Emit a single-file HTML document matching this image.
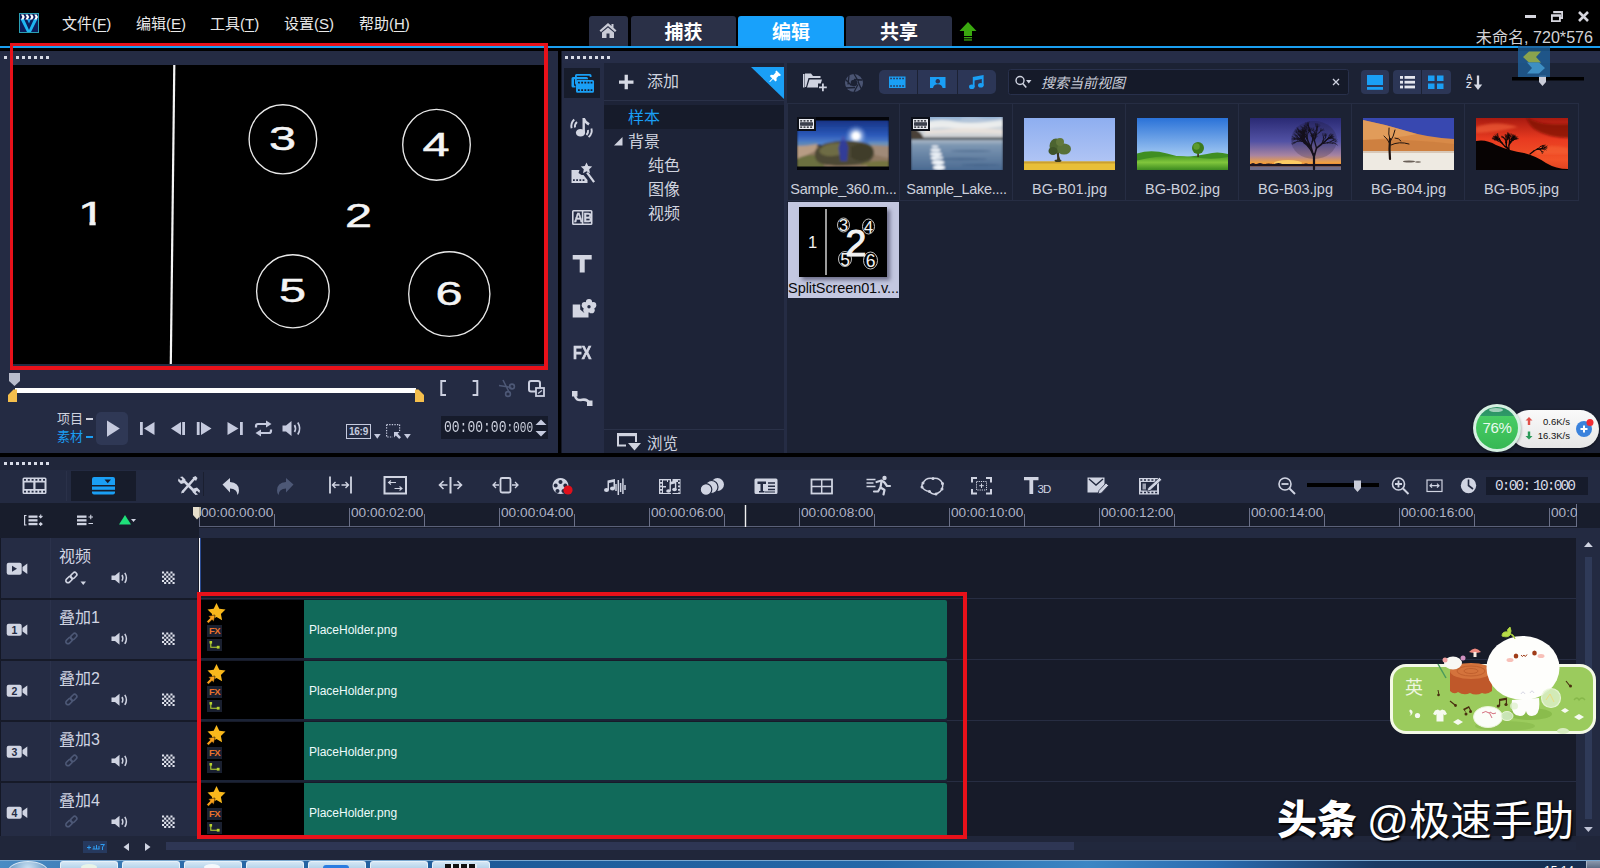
<!DOCTYPE html>
<html lang="zh-CN">
<head>
<meta charset="utf-8">
<title>VideoStudio</title>
<style>
*{box-sizing:border-box;margin:0;padding:0}
html,body{width:1600px;height:868px;overflow:hidden;background:#000}
body{position:relative;font-family:"Liberation Sans","Noto Sans CJK SC",sans-serif;color:#d4d7e2;font-size:15px;line-height:1}
.a{position:absolute}
svg{position:absolute;overflow:visible}
.t{position:absolute;white-space:nowrap}
/* top bar */
#top{left:0;top:0;width:1600px;height:46px;background:#000}
#blueline{left:0;top:46px;width:1600px;height:2px;background:#1b9ff0}
.menu{top:14px;font-size:15px;color:#e9e9e9;height:20px;line-height:20px}
.menu u{text-decoration:underline;text-underline-offset:2px}
.tab{top:16px;height:30px;background:#2a3047;color:#fff;font-weight:bold;font-size:19px;text-align:center;line-height:33px;border-radius:3px 3px 0 0}
.tab.on{background:#18a1fb}
/* panels */
#pv{left:0;top:51px;width:558px;height:402px;background:#242b43}
#lib{left:561px;top:51px;width:1039px;height:402px;background:#1c2234}
#tl{left:0;top:457px;width:1600px;height:403px;background:#20263a}
.rl{top:505px;font-size:13.700px;line-height:16px;color:#aeb3c6}
.lab{top:179px;width:111px;text-align:center;font-size:14.500px;line-height:20px;color:#ccd0dc}
.dots{height:3px;background:repeating-linear-gradient(90deg,#d8dbe6 0 3px,transparent 3px 6px)}
</style>
</head>
<body>
<!-- ============ TOP BAR ============ -->
<div id="top" class="a"></div>
<div id="blueline" class="a"></div>
<svg style="left:19px;top:13px" width="20" height="20" viewBox="0 0 20 20">
<rect x="0.5" y="0.5" width="19" height="19" fill="#0b1d5c" stroke="#2a9fb4"/>
<path d="M1.5 6 L5 6 L10 17 L15 6 L18.5 6 L12 19 L8 19 Z" fill="#1fb6f2"/>
<path d="M8 6 L12 6 L10 10.5 Z" fill="#1fa0e8"/>
<path d="M2 1.5h2.4l1.4 2.5l-1.4 2.5H2l1.4-2.5zM6.4 1.5h2.4l1.4 2.5l-1.4 2.5H6.4l1.4-2.5zM10.8 1.5h2.4l1.4 2.5l-1.4 2.5h-2.4l1.4-2.5zM15.2 1.5h2.4l1.4 2.5l-1.4 2.5h-2.4l1.4-2.5z" fill="#fff"/>
</svg>
<div class="t menu" style="left:62px">文件(<u>F</u>)</div>
<div class="t menu" style="left:136px">编辑(<u>E</u>)</div>
<div class="t menu" style="left:210px">工具(<u>T</u>)</div>
<div class="t menu" style="left:284px">设置(<u>S</u>)</div>
<div class="t menu" style="left:359px">帮助(<u>H</u>)</div>
<div class="a tab" style="left:589px;width:39px"></div>
<svg style="left:599px;top:22px" width="18" height="17" viewBox="0 0 18 17"><path d="M9 1 L0.5 8.5 L2 10 L9 4 L16 10 L17.5 8.5 L14.5 5.8 V2 H12.5 V4 Z" fill="#c9cbd6"/><path d="M9 5.5 L3 10.5 V16 H7.5 V11.5 H10.5 V16 H15 V10.5 Z" fill="#c9cbd6"/></svg>
<div class="a tab" style="left:631px;width:105px">捕获</div>
<div class="a tab on" style="left:738px;width:106px">编辑</div>
<div class="a tab" style="left:846px;width:106px">共享</div>
<svg style="left:959px;top:22px" width="18" height="19" viewBox="0 0 18 19"><path d="M9 0 L17.5 9 H13 V14 H5 V9 H0.5 Z" fill="#3aa80f"/><rect x="5" y="15" width="8" height="1.3" fill="#3aa80f"/><rect x="5" y="17.3" width="8" height="1.3" fill="#3aa80f"/></svg>
<div class="a" style="left:1525px;top:15px;width:11px;height:3px;background:#d6d6de"></div>
<svg style="left:1551px;top:11px" width="12" height="11" viewBox="0 0 12 11"><path d="M3 0.9 H11.1 V7 H9" fill="none" stroke="#d6d6de" stroke-width="1.8"/><rect x="0.9" y="4.4" width="8" height="5.7" fill="none" stroke="#d6d6de" stroke-width="1.8"/><rect x="0" y="3.5" width="9.8" height="2.2" fill="#d6d6de"/><rect x="2.2" y="0" width="9.8" height="2.2" fill="#d6d6de"/></svg>
<svg style="left:1578px;top:11px" width="11" height="11" viewBox="0 0 11 11"><path d="M1 1 L10 10 M10 1 L1 10" stroke="#d6d6de" stroke-width="2.6"/></svg>
<div class="t" style="right:7px;top:28px;font-size:16.100px;line-height:18px;color:#d2d2d6">未命名, 720*576</div>

<!-- ============ PREVIEW PANEL ============ -->
<div id="pv" class="a"></div>
<div class="a dots" style="left:4px;top:56px;width:45px"></div>
<!-- preview screen -->
<div class="a" style="left:10px;top:65px;width:535px;height:299px;background:#000"></div>
<svg style="left:13px;top:65px" width="531" height="299" viewBox="13 65 531 299">
<path d="M174.3 65 L170.8 364" stroke="#f4f4f4" stroke-width="2.2" fill="none"/>
<g fill="none" stroke="#e8e8e8" stroke-width="1.35">
<ellipse cx="282.9" cy="139.3" rx="33.8" ry="34.6"/>
<ellipse cx="436.5" cy="144.8" rx="33.8" ry="35.4"/>
<ellipse cx="292.9" cy="291.3" rx="36.3" ry="36.5"/>
<ellipse cx="449.3" cy="294" rx="40.6" ry="42.3"/>
</g>
<g fill="#f4f4f4" stroke="#f4f4f4" stroke-width=".45" font-family="Liberation Sans, sans-serif" font-size="32" text-anchor="middle">
<text transform="translate(91.500 225) scale(1.52 1.03)">1</text>
<text transform="translate(358.5 226.5) scale(1.52 1.03)">2</text>
<text transform="translate(282.5 150) scale(1.52 1.03)">3</text>
<text transform="translate(436 156) scale(1.52 1.03)">4</text>
<text transform="translate(292.5 302) scale(1.52 1.03)">5</text>
<text transform="translate(449 304.5) scale(1.52 1.03)">6</text>
</g>
<rect x="78" y="221.800" width="11.400" height="5" fill="#000"/><rect x="95.700" y="221.800" width="10" height="5" fill="#000"/>
</svg>
<!-- red annotation box -->
<div class="a" style="left:10px;top:43px;width:538px;height:327px;border:3px solid #e8111a;border-right-width:4px;border-bottom-width:4px"></div>
<!-- scrubber -->
<svg style="left:0;top:370px" width="558" height="40" viewBox="0 370 558 40">
<path d="M9 373 H20 V381 L14.5 386 L9 381 Z" fill="#b9bccb"/>
<rect x="15" y="388" width="401" height="5" fill="#fff"/>
<path d="M8 402 V395 L13.5 389.5 H17 V402 Z" fill="#f5bf4c"/>
<path d="M424 402 V395 L418.5 389.5 H415 V402 Z" fill="#f5bf4c"/>
<path d="M446 381 H441.3 V395 H446" fill="none" stroke="#ccd0e0" stroke-width="2"/>
<path d="M472.6 381 H477.3 V395 H472.6" fill="none" stroke="#ccd0e0" stroke-width="2"/>
<g stroke="#4d5876" stroke-width="1.6" fill="none"><path d="M503 380 L509 392 M499 385.5 L511.5 387.5"/><circle cx="512" cy="386.5" r="2.4"/><circle cx="508" cy="394" r="2.4"/></g>
<rect x="529" y="381" width="11" height="10.5" rx="2" fill="none" stroke="#ccd0e0" stroke-width="2"/>
<rect x="536" y="388" width="8" height="8" fill="#242b43" stroke="#ccd0e0" stroke-width="1.8"/>
<path d="M538 393.5 L542 390.5" stroke="#ccd0e0" stroke-width="1.2"/>
</svg>
<!-- transport -->
<div class="t" style="left:57px;top:411px;font-size:13px;line-height:16px;color:#cfd2de">项目</div>
<div class="a" style="left:86px;top:418px;width:7px;height:2px;background:#cfd2de"></div>
<div class="t" style="left:57px;top:429px;font-size:13px;line-height:16px;color:#1b9df2">素材</div>
<div class="a" style="left:86px;top:436px;width:7px;height:2px;background:#1b9df2"></div>
<div class="a" style="left:96px;top:412px;width:32px;height:33px;background:#2f3855;border-radius:5px"></div>
<svg style="left:100px;top:415px" width="210" height="26" viewBox="100 415 210 26" fill="#c5cade">
<path d="M107 420.5 L119.8 428.6 L107 436.8 Z"/>
<rect x="140" y="422" width="2.8" height="13"/><path d="M154.5 422 V435 L144 428.5 Z"/>
<path d="M181 422 V435 L171 428.5 Z"/><rect x="182.2" y="422" width="2.8" height="13"/>
<rect x="196.8" y="422" width="2.8" height="13"/><path d="M201 422 V435 L211.5 428.5 Z"/>
<path d="M227.5 422 V435 L238.5 428.5 Z"/><rect x="240" y="422" width="2.8" height="13"/>
<g fill="none" stroke="#c5cade" stroke-width="2.2"><path d="M256 427.5 V426 Q256 424 258 424 H267"/><path d="M271 429.5 V431 Q271 433 269 433 H260"/></g>
<path d="M266 420.5 L271.5 424 L266 427.5 Z"/><path d="M261 429.5 L255.5 433 L261 436.5 Z"/>
<path d="M282.5 425.5 H286 L291.5 421 V436 L286 431.5 H282.5 Z"/>
<g fill="none" stroke="#c5cade" stroke-width="1.7"><path d="M294.5 425 Q296.5 428.5 294.5 432"/><path d="M297.8 422.5 Q301.5 428.5 297.8 434.5"/></g>
</svg>
<div class="a" style="left:346px;top:424px;width:25px;height:15px;border:1px solid #c5cade"></div>
<div class="t" style="left:346px;top:424px;width:25px;height:15px;line-height:15px;font-size:10px;font-weight:bold;text-align:center;color:#c5cade;letter-spacing:-0.3px">16:9</div>
<svg style="left:372px;top:422px" width="42" height="20" viewBox="372 422 42 20" fill="#c5cade">
<path d="M374 434 H380.6 L377.3 438.8 Z"/><path d="M404 434 H410.8 L407.4 438.8 Z"/>
<rect x="386.6" y="424.6" width="13" height="12.4" fill="none" stroke="#c5cade" stroke-width="1.2" stroke-dasharray="1.3 1.3"/>
<rect x="392.5" y="431" width="9" height="9" fill="#242b43"/>
<path d="M394 432 H399.5 L397.7 433.8 L401 437.2 L399.2 439 L395.8 435.6 L394 437.5 Z"/>
</svg>
<div class="a" style="left:441px;top:416px;width:107px;height:23px;background:#161b2b"></div>
<div class="t" style="left:444px;top:418px;font-family:'Liberation Mono','DejaVu Sans Mono',monospace;font-size:17px;line-height:19px;color:#cdd1de;transform:scaleX(.765);transform-origin:0 0">00:00:00<span style="font-size:14.500px">:000</span></div>
<svg style="left:535px;top:419px" width="12" height="18" viewBox="0 0 12 18" fill="#c5cade"><path d="M0.5 6 L6 0.5 L11.5 6 Z"/><path d="M0.5 12 L6 17.5 L11.5 12 Z"/></svg>

<!-- ============ LIBRARY PANEL ============ -->
<div id="lib" class="a"></div>
<div class="a" style="left:561px;top:51px;width:1039px;height:12px;background:#262d47"></div>
<div class="a dots" style="left:565px;top:56px;width:45px"></div>
<!-- sidebar -->
<div class="a" style="left:561px;top:63px;width:43px;height:390px;background:#252c45"></div>
<div class="a" style="left:561px;top:51px;width:1px;height:402px;background:#141826"></div>
<div class="a" style="left:564px;top:68px;width:36px;height:30px;background:#171c2b"></div>
<svg style="left:565px;top:66px" width="36" height="350" viewBox="565 66 36 350">
<!-- media (active) -->
<g fill="#1a9ff5"><path d="M573 74 h13.5 q1.5 0 1.500 1.500 v1.500 h-1.800 v-1.200 h-12.900 v7.200 h1.500 v1.800 h-1.800 q-1.500 0 -1.500 -1.500 v-7.800 q0 -1.500 1.500 -1.500z" transform="translate(3.500 0)"/>
<path d="M573 77 h13.500 q1.500 0 1.500 1.500 v0.700 h-14 v6.500 h1.500 v1.800 h-2.500 q-1.500 0 -1.500 -1.500 v-7.500 q0 -1.500 1.500 -1.500z"/>
<path d="M577.500 80 h15 q1.500 0 1.500 1.500 v9.700 q0 1.500 -1.500 1.500 h-15 q-1.500 0 -1.500 -1.500 v-9.700 q0 -1.500 1.500 -1.500z M578 81.800 v1.600 h1.800 v-1.600z M581.200 81.800 v1.600 h1.800 v-1.600z M584.400 81.800 v1.600 h1.800 v-1.600z M587.600 81.800 v1.600 h1.800 v-1.600z M590.600 81.800 v1.600 h1.800 v-1.600z M578 89.300 v1.600 h1.800 v-1.600z M581.200 89.300 v1.600 h1.800 v-1.600z M584.400 89.300 v1.600 h1.800 v-1.600z M587.600 89.300 v1.600 h1.800 v-1.600z M590.600 89.300 v1.600 h1.800 v-1.600z" fill-rule="evenodd"/></g>
<g fill="#d3d6e2">
<!-- music -->
<ellipse cx="580.500" cy="132.800" rx="4.600" ry="3.800"/><path d="M582.500 133 V118 h2.400 q.8 3 4.800 5.300 l-1.300 2.200 q-2.200-1.200-3.500-2.800 V133z"/>
<g fill="none" stroke="#d3d6e2" stroke-width="1.900"><path d="M577 122 q-2.600 2.200 -2 5.500"/><path d="M574.200 119.500 q-3.800 3.800 -2.600 8.800"/><path d="M588 130 q.6 2.800 -1.500 5"/><path d="M591.400 128.500 q1.400 5 -2.800 8.600"/></g>
<!-- transition -->
<path d="M571.500 170 h8 l-1 3 3 2 h2 l4 5 v3 h-16z M573 179.200 v1.800 h1.800 v-1.800z M576.200 179.200 v1.800 h1.800 v-1.800z M579.400 179.200 v1.800 h1.800 v-1.800z M582.600 179.200 v1.800 h1.800 v-1.800z" fill-rule="evenodd"/>
<path d="M586.500 162.500 l1.700 3.600 4 .5 -3 2.700 .8 4 -3.500 -2 -3.500 2 .8 -4 -3 -2.700 4 -.5z"/>
<path d="M588 172 l7 9.500 -1.800 1.300 -7 -9.500z"/>
<!-- AB -->
<path d="M573.500 210 h17.500 q1.500 0 1.500 1.500 v12 q0 1.500 -1.500 1.500 h-17.500 q-1.500 0 -1.500 -1.500 v-12 q0 -1.500 1.500 -1.500z M573.600 211.600 v11.800 h8.200 v-11.800z M583.400 211.600 v11.800 h7.500 v-11.800z" fill-rule="evenodd"/>
<!-- T -->
<path d="M572.700 255 h19 v4.500 h-7 v13 h-5 v-13 h-7z"/>
<!-- graphic -->
<path d="M572.700 304.500 h7.500 v5 l3.500 3 h4.800 v5 h-15.800z"/>
<g><circle cx="589" cy="302" r="3.100"/><circle cx="593.200" cy="305.200" r="3.100"/><circle cx="591.600" cy="310.200" r="3.100"/><circle cx="586.400" cy="310.200" r="3.100"/><circle cx="584.800" cy="305.200" r="3.100"/><circle cx="589" cy="306.800" r="3"/></g>
<circle cx="589" cy="306.800" r="1.700" fill="#252c45"/>
<!-- path -->
<rect x="572" y="391" width="5.500" height="5.500"/><rect x="587" y="400.500" width="5.500" height="5.500"/>
<path d="M575 395 q.5 6 7 4.800 q5.500 -1 7.500 3.700" fill="none" stroke="#d3d6e2" stroke-width="2.600"/>
</g>
</svg>
<div class="t" style="left:573px;top:341px;font-size:18px;line-height:24px;font-weight:bold;color:#d3d6e2;-webkit-text-stroke:.7px #d3d6e2;transform:scaleX(.8);transform-origin:0 0;letter-spacing:0">FX</div>
<div class="t" style="left:574px;top:207px;font-size:13.500px;line-height:21px;font-weight:bold;color:#d3d6e2;-webkit-text-stroke:.4px #d3d6e2;letter-spacing:.8px;transform:scaleX(.9);transform-origin:0 0">AB</div>
<!-- tree panel -->
<div class="a" style="left:604px;top:63px;width:180px;height:390px;background:#1d2337"></div>
<div class="a" style="left:604px;top:100px;width:180px;height:1px;background:#2a3148"></div>
<div class="a" style="left:604px;top:105px;width:180px;height:24px;background:#161b2a"></div>
<div class="a" style="left:604px;top:429px;width:180px;height:1px;background:#2a3148"></div>
<svg style="left:604px;top:63px" width="180" height="40" viewBox="604 63 180 40">
<path d="M619 80.400 h5.600 v-5.600 h3.300 v5.600 h5.600 v3.300 h-5.600 v5.600 h-3.300 v-5.600 h-5.600z" fill="#d6d9e4"/>
<path d="M751 67 H784 V99 Z" fill="#1a9ff5"/>
<path d="M776.500 70.500 l4.500 4.500 -1.200 1 -1 -.3 -2.300 2.300 .2 2.400 -1.200 1.200 -2.500 -2.500 -3 3 -.7 -.7 3 -3 -2.500 -2.500 1.200 -1.200 2.400 .2 2.300 -2.300 -.3 -1z" fill="#fff"/>
</svg>
<div class="t" style="left:647px;top:71px;font-size:16px;line-height:22px;color:#d0d3df">添加</div>
<div class="t" style="left:628px;top:107px;font-size:16px;line-height:22px;color:#1a9ff5">样本</div>
<svg style="left:614px;top:137px" width="9" height="9" viewBox="0 0 9 9"><path d="M8.500 0 V8.500 H0z" fill="#d0d3df"/></svg>
<div class="t" style="left:628px;top:131px;font-size:16px;line-height:22px;color:#d0d3df">背景</div>
<div class="t" style="left:648px;top:155px;font-size:16px;line-height:22px;color:#d0d3df">纯色</div>
<div class="t" style="left:648px;top:179px;font-size:16px;line-height:22px;color:#d0d3df">图像</div>
<div class="t" style="left:648px;top:203px;font-size:16px;line-height:22px;color:#d0d3df">视频</div>
<svg style="left:617px;top:433px" width="25" height="18" viewBox="0 0 25 18"><path d="M1 1 H19 V9 M9 12.500 H1 V1" fill="none" stroke="#d0d3df" stroke-width="2"/><rect x="0" y="0" width="20" height="3.200" fill="#d0d3df"/><path d="M11 10 H24 L17.500 17.500z" fill="#d0d3df"/></svg>
<div class="t" style="left:647px;top:433px;font-size:15.500px;line-height:22px;color:#d0d3df">浏览</div>
<div class="a" style="left:784px;top:63px;width:3px;height:390px;background:#252c44"></div>
<!-- library toolbar -->
<svg style="left:787px;top:63px" width="813" height="40" viewBox="787 63 813 40">
<!-- folder+ -->
<g fill="#cfd3e0"><path d="M805 73.500 h6 l2 2.500 h7.500 v2 h-12 l-2.500 9 h-1z"/><path d="M809.500 79.500 h12.500 l-1.200 4 h-2.800 v4 h-11z"/><path d="M819 86.500 h3 v-3 h1.800 v3 h3 v1.800 h-3 v3 h-1.800 v-3 h-3z"/><path d="M803 74 h1.500 v13.500 h-1.500z"/></g>
<!-- aperture -->
<g><circle cx="854" cy="83" r="9" fill="#4b5573"/><g stroke="#1c2234" stroke-width="1.300" fill="none"><path d="M854 74 l4.500 7.500 M862.500 80 l-8.500 -0.500 M861 88.500 l-3 -7 M854 92 l4 -7.500 M846 88 l9 -0.500 M845.500 79.500 l6 6 M849 75.500 l-1 9"/></g><circle cx="854" cy="83" r="3.300" fill="#1c2234"/></g>
<!-- segmented -->
<rect x="879" y="70" width="117" height="24" rx="5" fill="#2c3656"/>
<path d="M917.500 70 V94 M957.500 70 V94" stroke="#1c2234" stroke-width="1"/>
<g fill="#1a9ff5">
<path d="M889 76.500 h16.500 v11.500 h-16.500z M890.200 77.700 v1.500 h1.700 v-1.500z M893.200 77.700 v1.500 h1.700 v-1.500z M896.200 77.700 v1.500 h1.700 v-1.500z M899.200 77.700 v1.500 h1.700 v-1.500z M902.200 77.700 v1.500 h1.700 v-1.500z M890.200 85.300 v1.500 h1.700 v-1.500z M893.200 85.300 v1.500 h1.700 v-1.500z M896.200 85.300 v1.500 h1.700 v-1.500z M899.200 85.300 v1.500 h1.700 v-1.500z M902.200 85.300 v1.500 h1.700 v-1.500z" fill-rule="evenodd"/>
<path d="M930 77 h15.500 v11 h-15.500z M937.800 79 a2.300 2.300 0 1 0 0.010 0z M933 88 q0.500 -3.800 4.800 -3.800 q4.200 0 4.800 3.800z" fill-rule="evenodd"/>
<ellipse cx="971.800" cy="86.800" rx="2.800" ry="2.300"/><ellipse cx="980.800" cy="85.300" rx="2.800" ry="2.300"/><path d="M972.800 87 V77 l10.800 -2 V85.500 h-1.800 V79 l-7.200 1.400 V87z"/>
</g>
<!-- search -->
<rect x="1008.500" y="69.500" width="340" height="25" rx="2" fill="#151a29" stroke="#28304b"/>
<circle cx="1020" cy="80.500" r="4" fill="none" stroke="#cfd3e0" stroke-width="1.400"/><path d="M1022.800 83.500 l3.500 4" stroke="#cfd3e0" stroke-width="1.600"/><path d="M1026 80 h5.500 l-2.750 3.500z" fill="#cfd3e0"/>
<path d="M1333 79 l6 6 M1339 79 l-6 6" stroke="#cfd3e0" stroke-width="1.300"/>
<!-- view buttons -->
<rect x="1361" y="70" width="28" height="24" rx="4" fill="#2c3656"/>
<rect x="1393" y="70" width="58" height="24" rx="4" fill="#2c3656"/>
<path d="M1421.500 70 V94" stroke="#1c2234"/>
<rect x="1367" y="75" width="16" height="10" fill="#1a9ff5"/><rect x="1367" y="87" width="16" height="2.800" fill="#1a9ff5"/>
<g fill="#e4e6ee"><rect x="1400" y="76" width="3" height="2.800"/><rect x="1404.500" y="76" width="10.500" height="2.800"/><rect x="1400" y="80.800" width="3" height="2.800"/><rect x="1404.500" y="80.800" width="10.500" height="2.800"/><rect x="1400" y="85.600" width="3" height="2.800"/><rect x="1404.500" y="85.600" width="10.500" height="2.800"/></g>
<g fill="#1a9ff5"><rect x="1428" y="75.500" width="6.500" height="5.500"/><rect x="1437" y="75.500" width="6.500" height="5.500"/><rect x="1428" y="83.500" width="6.500" height="5.500"/><rect x="1437" y="83.500" width="6.500" height="5.500"/></g>
<!-- sort -->
<path d="M1478 75.500 V87" stroke="#d6d9e4" stroke-width="2.300" fill="none"/><path d="M1473.800 84.500 h8.400 l-4.200 5.500z" fill="#d6d9e4"/>
<!-- slider -->
<rect x="1512" y="77" width="72" height="3.500" fill="#000"/>
<path d="M1539 75.500 h7 v6.500 l-3.500 4 -3.500 -4z" fill="#c9ccd8"/>
</svg>
<div class="t" style="left:1466px;top:73px;font-size:9px;line-height:9px;font-weight:bold;color:#d6d9e4">A</div>
<div class="t" style="left:1466px;top:81px;font-size:9px;line-height:9px;font-weight:bold;color:#d6d9e4">Z</div>
<div class="t" style="left:1041px;top:73px;font-size:14px;line-height:20px;font-style:italic;color:#c9ccd8">搜索当前视图</div>
<!-- floating chevrons -->
<div class="a" style="left:1518px;top:46px;width:32px;height:31px;background:rgba(31,94,150,.82)"></div>
<svg style="left:1518px;top:46px" width="32" height="31" viewBox="0 0 32 31"><path d="M5 11 l6 -5.500 h12 l-5 5.500 5 5.500 h-12z" fill="#8aa34e"/><path d="M27 22 l-6 -5.500 h-12 l5 5.500 -5 5.500 h12z" fill="#3e8fc4"/></svg>
<!-- grid -->
<div class="a" style="left:787px;top:103px;width:792px;height:98px;border:1px solid #262d43;background:repeating-linear-gradient(90deg,transparent 0 112px,#262d43 112px 113px) -1px 0"></div>
<!-- thumbnails -->
<svg style="left:797px;top:117px" width="92" height="53" viewBox="0 0 92 53">
<defs><linearGradient id="s1" x1="0" y1="0" x2="0" y2="1"><stop offset="0" stop-color="#16307e"/><stop offset=".6" stop-color="#2a58b8"/><stop offset="1" stop-color="#5a8ad0"/></linearGradient>
<radialGradient id="sun"><stop offset="0" stop-color="#fff"/><stop offset=".3" stop-color="#eaf2ff"/><stop offset="1" stop-color="#5a8ad8" stop-opacity="0"/></radialGradient>
<filter id="bl1" x="-5%" y="-5%" width="110%" height="110%"><feGaussianBlur stdDeviation=".9"/></filter>
<clipPath id="c1"><rect y="3.500" width="92" height="46"/></clipPath></defs>
<rect width="92" height="53" fill="#04050a"/>
<g clip-path="url(#c1)"><g filter="url(#bl1)">
<rect y="2" width="92" height="26" fill="url(#s1)"/>
<circle cx="59" cy="19" r="11" fill="url(#sun)"/><circle cx="59" cy="19" r="3.500" fill="#fff"/>
<rect y="25" width="20" height="5" fill="#5c86b8"/><rect x="72" y="25" width="20" height="5" fill="#6a90b8"/>
<rect y="29" width="92" height="23" fill="#8f7862"/>
<path d="M0 29 q10 0 21 -2 l-3 7 -18 9z" fill="#b89c84"/>
<path d="M74 28 l18 1 v12 l-14 -3z" fill="#a08a78"/>
<path d="M0 42 q12 -7 24 -2 l4 12 H0z" fill="#6c7040"/>
<path d="M18 40 q-2 -10 12 -14 q16 -4 34 -1 q14 2 13 12 q-1 10 -20 11 q-20 2 -32 -1 q-6 -2 -7 -7z" fill="#4e4a34"/>
<path d="M22 34 q4 -8 20 -8 q10 0 8 6 q-2 6 -14 7 q-12 1 -14 -5z" fill="#6e6c44"/>
<path d="M54 30 q10 -6 20 0 q4 6 -2 12 q-10 5 -18 -2z" fill="#3f3c2c"/>
<path d="M64 47 q12 -4 28 -3 v8 h-28z" fill="#76743f"/>
<path d="M30 48 q20 3 40 0 v5 h-40z" fill="#9a8068"/>
<path d="M43.500 24 q3 -5 5.500 0 l2 6 -1 14 h-6.500 l-2 -13z" fill="#303c98"/>
<circle cx="46.300" cy="21.500" r="2.200" fill="#4656b0"/>
</g></g>
<rect x="0" y="0" width="19" height="14" fill="#0c0f18"/><path d="M2 2 h15 v10 h-15z M3.200 3.200 v1.300 h2 v-1.300z M6.500 3.200 v1.300 h2 v-1.300z M9.800 3.200 v1.300 h2 v-1.300z M13.100 3.200 v1.300 h2 v-1.300z M3.200 9.500 v1.300 h2 v-1.300z M6.500 9.500 v1.300 h2 v-1.300z M9.800 9.500 v1.300 h2 v-1.300z M13.100 9.500 v1.300 h2 v-1.300z M3.200 5.500 v3 h12.600 v-3z" fill="#e8eaf0" fill-rule="evenodd"/><rect x="3.200" y="5.500" width="12.600" height="3" fill="#3a3f4c"/></svg>
<svg style="left:911px;top:117px" width="92" height="53" viewBox="0 0 92 53">
<defs><linearGradient id="s2" x1="0" y1="0" x2="0" y2="1"><stop offset="0" stop-color="#7ea2cc"/><stop offset=".4" stop-color="#cfd8e0"/><stop offset="1" stop-color="#d0d0d0"/></linearGradient>
<linearGradient id="w2" x1="0" y1="0" x2="0" y2="1"><stop offset="0" stop-color="#b0bcc8"/><stop offset=".18" stop-color="#7c96b2"/><stop offset="1" stop-color="#486890"/></linearGradient>
<filter id="bl2" x="-5%" y="-5%" width="110%" height="110%"><feGaussianBlur stdDeviation=".8"/></filter>
<clipPath id="c2"><rect width="92" height="53"/></clipPath></defs>
<g clip-path="url(#c2)"><g filter="url(#bl2)">
<rect y="-2" width="92" height="25" fill="url(#s2)"/>
<path d="M16 5 q14 -4 30 0 q18 3 46 -3 v7 q-30 5 -50 2 q-14 -2 -26 1z" fill="#f2f2f0" opacity=".8"/>
<path d="M14 12 q10 2 24 0 q20 -3 54 1 v4 q-40 -2 -78 0z" fill="#ece4dc" opacity=".8"/>
<path d="M50 1 q10 -2 20 0 q10 2 22 -1 v3 q-20 3 -42 0z" fill="#b8c8dc" opacity=".7"/>
<rect y="22.500" width="92" height="32" fill="url(#w2)"/>
<path d="M0 20.500 h92 v2.300 h-92z" fill="#3a444e"/>
<path d="M0 12 q4 -3 7 2 q4 2 6 8 H0z" fill="#4a4138"/>
<g fill="#f4f7fb"><ellipse cx="24" cy="29.500" rx="3.500" ry="1"/><ellipse cx="24.500" cy="33" rx="5" ry="1.500"/><ellipse cx="25" cy="37" rx="6" ry="1.800"/><ellipse cx="26" cy="41" rx="6.500" ry="2"/><ellipse cx="27" cy="45.500" rx="6.500" ry="2.200"/><ellipse cx="28" cy="50.500" rx="6" ry="2.400"/></g>
<g fill="#3c5a80" opacity=".5"><ellipse cx="60" cy="34" rx="20" ry="1"/><ellipse cx="50" cy="42" rx="26" ry="1.200"/><ellipse cx="70" cy="48" rx="20" ry="1.200"/></g>
</g></g>
<rect x="0" y="0" width="19" height="14" fill="#0c0f18"/><path d="M2 2 h15 v10 h-15z M3.200 3.200 v1.300 h2 v-1.300z M6.500 3.200 v1.300 h2 v-1.300z M9.800 3.200 v1.300 h2 v-1.300z M13.100 3.200 v1.300 h2 v-1.300z M3.200 9.500 v1.300 h2 v-1.300z M6.500 9.500 v1.300 h2 v-1.300z M9.800 9.500 v1.300 h2 v-1.300z M13.100 9.500 v1.300 h2 v-1.300z M3.200 5.500 v3 h12.600 v-3z" fill="#e8eaf0" fill-rule="evenodd"/><rect x="3.200" y="5.500" width="12.600" height="3" fill="#3a3f4c"/></svg>
<svg style="left:1024px;top:118px" width="91" height="52" viewBox="0 0 91 52">
<defs><linearGradient id="s3" x1="0" y1="0" x2="0" y2="1"><stop offset="0" stop-color="#8eaef0"/><stop offset="1" stop-color="#b0c4f4"/></linearGradient></defs>
<rect width="91" height="44" fill="url(#s3)"/>
<rect y="43.500" width="91" height="8.500" fill="#e8bf38"/><rect y="43.500" width="91" height="2" fill="#c9a030"/>
<path d="M33 42.500 q0.500 -6 -1 -9 l3 0 q-0.500 5 1.500 9z" fill="#3a3520"/>
<ellipse cx="32" cy="28" rx="6.500" ry="7.500" fill="#4c6430"/><ellipse cx="40" cy="31" rx="7" ry="5.500" fill="#587038"/><ellipse cx="29" cy="33" rx="4.500" ry="4" fill="#3f5428"/><ellipse cx="36" cy="24" rx="4" ry="4" fill="#62783c"/>
<ellipse cx="34" cy="42.800" rx="3.500" ry="1.200" fill="#3a3a22"/>
</svg>
<svg style="left:1137px;top:118px" width="91" height="52" viewBox="0 0 91 52">
<defs><linearGradient id="s4" x1="0" y1="0" x2="0" y2="1"><stop offset="0" stop-color="#2a72d8"/><stop offset="1" stop-color="#a8cdf4"/></linearGradient>
<linearGradient id="g4" x1="0" y1="0" x2="0" y2="1"><stop offset="0" stop-color="#4c9a24"/><stop offset=".45" stop-color="#80c63c"/><stop offset="1" stop-color="#3c8a20"/></linearGradient></defs>
<rect width="91" height="40" fill="url(#s4)"/>
<path d="M0 35.500 q14 -4.500 30 0 q9 3 18 3.500 q12 -1 22 -3 q10 -3 21 0 v16 H0z" fill="#3f8e22"/>
<path d="M0 42.500 q30 -7 58 -3 q18 2.500 33 -0.500 v13 H0z" fill="url(#g4)"/>
<rect x="60.300" y="33" width="1.600" height="6" fill="#3a3018"/>
<circle cx="61" cy="30" r="6" fill="#3c7a1c"/><circle cx="59.500" cy="28.500" r="3.200" fill="#5c9a2c"/>
</svg>
<svg style="left:1250px;top:118px" width="91" height="52" viewBox="0 0 91 52">
<defs><linearGradient id="s5" x1="0" y1="0" x2="0" y2="1"><stop offset="0" stop-color="#2a2a74"/><stop offset=".45" stop-color="#5252a4"/><stop offset=".72" stop-color="#a884a0"/><stop offset=".86" stop-color="#f0a040"/><stop offset=".92" stop-color="#e06a20"/><stop offset="1" stop-color="#8a8aa0"/></linearGradient>
<clipPath id="c5"><rect width="91" height="52"/></clipPath></defs>
<rect width="91" height="52" fill="url(#s5)"/>
<ellipse cx="38" cy="45" rx="14" ry="3" fill="#ffd468" opacity=".85"/>
<rect y="46" width="91" height="2.500" fill="#1c1420"/>
<rect y="48.500" width="91" height="3.500" fill="#6e6c88"/>
<path d="M0 46.500 q3 -3 6 0 q4 -3 8 0 q5 -2 9 0 q6 -3 10 0 l20 0 q3 -2 6 0 l32 0 v1 H0z" fill="#1c1420"/>
<g clip-path="url(#c5)" stroke="#15111c" fill="none" stroke-linecap="round"><path d="M64.0 50.0L64.0 39.0" stroke-width="1.86"/><path d="M64.0 39.0L61.3 32.6M64.0 39.0L66.5 30.1M64.0 39.0L61.3 30.0" stroke-width="1.60"/><path d="M61.3 32.6L61.1 27.2M61.3 32.6L57.5 27.8M66.5 30.1L72.0 25.6M66.5 30.1L64.4 22.6M66.5 30.1L71.5 26.4M61.3 30.0L57.1 25.0M61.3 30.0L56.2 25.4M61.3 30.0L58.1 23.3" stroke-width="1.34"/><path d="M61.1 27.2L62.3 23.1M61.1 27.2L62.7 23.0M57.5 27.8L54.2 25.1M57.5 27.8L55.5 23.7M57.5 27.8L54.3 23.8M72.0 25.6L77.5 24.8M72.0 25.6L76.2 21.9M64.4 22.6L61.8 16.7M64.4 22.6L65.4 17.1M64.4 22.6L66.1 17.0M71.5 26.4L73.3 22.2M71.5 26.4L75.5 23.2M57.1 25.0L52.0 23.3M57.1 25.0L54.3 20.6M56.2 25.4L54.2 20.1M56.2 25.4L52.7 22.6M56.2 25.4L52.3 20.9M58.1 23.3L55.4 18.4M58.1 23.3L56.7 17.6M58.1 23.3L57.1 18.6" stroke-width="1.08"/><path d="M62.3 23.1L62.6 20.1M62.3 23.1L63.5 19.8M62.7 23.0L62.8 19.5M62.7 23.0L64.7 20.5M54.2 25.1L52.9 22.3M54.2 25.1L53.1 22.4M54.2 25.1L52.7 21.9M55.5 23.7L53.3 21.4M55.5 23.7L52.4 22.0M54.3 23.8L52.0 21.4M54.3 23.8L54.2 19.6M77.5 24.8L80.8 23.7M77.5 24.8L82.3 25.1M76.2 21.9L78.9 19.5M76.2 21.9L79.8 20.3M76.2 21.9L78.7 19.4M61.8 16.7L59.7 11.7M61.8 16.7L58.9 12.6M65.4 17.1L66.0 12.5M65.4 17.1L64.3 13.8M66.1 17.0L67.1 12.0M66.1 17.0L69.2 14.6M73.3 22.2L75.4 19.9M73.3 22.2L73.5 19.2M75.5 23.2L78.4 20.7M75.5 23.2L78.1 20.5M52.0 23.3L47.9 21.4M52.0 23.3L48.9 20.4M52.0 23.3L47.4 23.2M54.3 20.6L54.8 16.3M54.3 20.6L53.6 17.0M54.3 20.6L52.2 17.7M54.2 20.1L54.4 15.9M54.2 20.1L53.7 15.7M52.7 22.6L51.9 19.4M52.7 22.6L51.1 19.7M52.3 20.9L49.1 17.1M52.3 20.9L47.8 20.1M55.4 18.4L52.3 16.3M55.4 18.4L51.7 15.3M55.4 18.4L53.4 15.5M56.7 17.6L56.0 13.0M56.7 17.6L54.1 15.1M57.1 18.6L54.0 15.8M57.1 18.6L58.0 14.9" stroke-width="0.82"/><path d="M62.6 20.1L61.4 18.4M62.6 20.1L62.4 17.7M62.6 20.1L62.1 18.2M63.5 19.8L64.7 17.1M63.5 19.8L63.2 17.4M63.5 19.8L63.6 17.0M62.8 19.5L61.9 17.1M62.8 19.5L63.7 17.2M64.7 20.5L65.2 18.0M64.7 20.5L65.6 18.6M64.7 20.5L66.4 19.1M52.9 22.3L52.7 20.3M52.9 22.3L51.0 20.9M52.9 22.3L53.5 20.2M53.1 22.4L52.7 20.0M53.1 22.4L52.2 20.5M52.7 21.9L52.8 19.3M52.7 21.9L52.8 19.4M53.3 21.4L51.1 20.7M53.3 21.4L52.8 19.0M53.3 21.4L51.5 19.8M52.4 22.0L50.1 22.2M52.4 22.0L51.5 20.0M52.0 21.4L51.6 18.6M52.0 21.4L49.6 21.1M52.0 21.4L51.2 19.4M54.2 19.6L53.6 16.9M54.2 19.6L53.2 17.0M80.8 23.7L83.0 22.1M80.8 23.7L83.5 22.3M82.3 25.1L85.4 23.6M82.3 25.1L85.6 25.7M78.9 19.5L81.9 19.2M78.9 19.5L81.2 17.7M79.8 20.3L82.8 20.5M79.8 20.3L81.0 18.0M78.7 19.4L79.4 17.3M78.7 19.4L81.5 19.2M59.7 11.7L57.8 7.6M59.7 11.7L58.6 7.9M59.7 11.7L58.1 7.3M58.9 12.6L56.1 9.7M58.9 12.6L57.0 9.4M58.9 12.6L58.2 9.1M66.0 12.5L67.3 8.7M66.0 12.5L67.4 9.4M64.3 13.8L63.6 11.4M64.3 13.8L62.5 12.3M67.1 12.0L67.4 8.5M67.1 12.0L66.2 8.3M69.2 14.6L70.7 12.5M69.2 14.6L71.9 12.5M75.4 19.9L75.9 17.4M75.4 19.9L75.7 17.9M73.5 19.2L74.7 17.1M73.5 19.2L73.0 17.1M78.4 20.7L80.9 20.1M78.4 20.7L80.7 18.4M78.1 20.5L80.7 19.0M78.1 20.5L80.5 19.7M47.9 21.4L44.7 20.7M47.9 21.4L44.7 21.1M47.9 21.4L46.0 18.4M48.9 20.4L47.3 18.2M48.9 20.4L46.4 17.6M47.4 23.2L44.3 24.4M47.4 23.2L44.9 24.9M54.8 16.3L53.8 12.6M54.8 16.3L54.2 13.2M54.8 16.3L56.7 13.4M53.6 17.0L54.4 14.4M53.6 17.0L51.8 14.8M53.6 17.0L54.1 14.4M52.2 17.7L49.9 16.3M52.2 17.7L51.0 15.4M54.4 15.9L55.7 13.2M54.4 15.9L54.8 12.9M54.4 15.9L52.6 13.5M53.7 15.7L54.9 12.7M53.7 15.7L53.8 12.5M51.9 19.4L52.8 17.1M51.9 19.4L50.7 17.4M51.1 19.7L49.2 17.8M51.1 19.7L50.9 17.3M49.1 17.1L46.9 14.2M49.1 17.1L46.5 14.8M49.1 17.1L48.4 12.9M47.8 20.1L44.4 21.2M47.8 20.1L44.6 19.9M52.3 16.3L51.1 14.3M52.3 16.3L50.5 14.9M51.7 15.3L48.8 13.7M51.7 15.3L49.1 12.8M53.4 15.5L52.9 12.9M53.4 15.5L51.1 13.6M53.4 15.5L52.9 12.6M56.0 13.0L56.2 9.0M56.0 13.0L54.7 10.1M56.0 13.0L53.6 9.9M54.1 15.1L52.7 12.6M54.1 15.1L52.1 13.7M54.0 15.8L52.0 13.7M54.0 15.8L51.2 13.9M58.0 14.9L60.0 13.0M58.0 14.9L59.8 12.1M58.0 14.9L59.7 12.1" stroke-width="0.56"/><path d="M61.4 18.4L60.6 17.3M61.4 18.4L60.5 17.2M62.4 17.7L61.5 15.8M62.4 17.7L61.5 16.4M62.4 17.7L62.8 15.9M62.1 18.2L62.4 16.8M62.1 18.2L61.1 16.9M64.7 17.1L65.0 15.3M64.7 17.1L65.8 15.3M63.2 17.4L63.5 15.8M63.2 17.4L63.0 15.3M63.2 17.4L63.2 15.4M63.6 17.0L65.0 15.0M63.6 17.0L64.9 15.3M61.9 17.1L62.4 15.0M61.9 17.1L60.6 15.9M61.9 17.1L61.3 15.0M63.7 17.2L63.6 15.2M63.7 17.2L63.5 15.6M65.2 18.0L64.4 16.2M65.2 18.0L66.6 16.7M65.6 18.6L65.6 17.1M65.6 18.6L66.0 17.0M66.4 19.1L67.2 17.9M66.4 19.1L67.7 18.4M52.7 20.3L52.4 19.0M52.7 20.3L53.4 19.2M51.0 20.9L49.4 20.8M51.0 20.9L49.1 20.8M53.5 20.2L54.6 18.8M53.5 20.2L53.4 18.4M53.5 20.2L53.9 18.9M52.7 20.0L51.8 18.5M52.7 20.0L53.4 18.0M52.7 20.0L53.4 18.0M52.2 20.5L51.7 18.9M52.2 20.5L50.8 19.8M52.8 19.3L51.9 17.1M52.8 19.3L52.6 17.1M52.8 19.3L53.1 17.4M52.8 19.4L52.1 18.0M52.8 19.4L52.3 17.4M52.8 19.4L53.8 18.1M51.1 20.7L49.8 19.2M51.1 20.7L49.9 19.7M51.1 20.7L49.9 19.5M52.8 19.0L53.5 17.2M52.8 19.0L53.0 17.0M52.8 19.0L52.1 17.6M51.5 19.8L50.4 18.1M51.5 19.8L49.7 18.8M50.1 22.2L48.6 21.6M50.1 22.2L48.8 22.9M50.1 22.2L48.7 23.5M51.5 20.0L50.3 19.2M51.5 20.0L50.4 19.1M51.6 18.6L50.0 16.7M51.6 18.6L51.4 16.8M49.6 21.1L47.5 20.5M49.6 21.1L47.7 21.0M51.2 19.4L49.8 18.3M51.2 19.4L51.7 17.7M53.6 16.9L53.2 14.7M53.6 16.9L52.5 15.3M53.2 17.0L51.6 16.0M53.2 17.0L52.3 14.7M83.0 22.1L83.8 20.4M83.0 22.1L83.9 20.4M83.5 22.3L85.5 20.7M83.5 22.3L85.8 22.6M83.5 22.3L85.7 21.8M85.4 23.6L87.5 23.8M85.4 23.6L87.4 21.8M85.6 25.7L87.2 27.1M85.6 25.7L87.8 27.3M81.9 19.2L83.9 20.0M81.9 19.2L84.2 18.6M81.2 17.7L83.1 17.0M81.2 17.7L82.5 16.0M82.8 20.5L85.2 21.5M82.8 20.5L85.2 21.5M81.0 18.0L82.1 16.5M81.0 18.0L81.3 15.9M79.4 17.3L80.4 15.8M79.4 17.3L80.7 16.1M79.4 17.3L80.3 16.1M81.5 19.2L83.4 18.8M81.5 19.2L83.3 18.5M57.8 7.6L58.2 4.5M57.8 7.6L55.9 5.5M57.8 7.6L57.1 4.4M58.6 7.9L58.0 4.8M58.6 7.9L58.0 5.1M58.1 7.3L59.3 3.8M58.1 7.3L55.7 4.5M58.1 7.3L58.0 4.1M56.1 9.7L54.5 7.0M56.1 9.7L54.6 6.9M57.0 9.4L54.1 8.0M57.0 9.4L56.1 6.5M58.2 9.1L58.2 6.2M58.2 9.1L57.0 6.8M67.3 8.7L69.3 6.2M67.3 8.7L67.7 5.5M67.4 9.4L69.0 7.7M67.4 9.4L70.0 7.9M63.6 11.4L63.1 10.0M63.6 11.4L63.8 9.6M62.5 12.3L61.8 10.5M62.5 12.3L61.7 10.7M67.4 8.5L67.9 6.4M67.4 8.5L66.8 5.9M66.2 8.3L66.0 5.9M66.2 8.3L65.9 5.7M66.2 8.3L65.4 5.6M70.7 12.5L70.8 10.6M70.7 12.5L71.1 10.5M70.7 12.5L71.8 11.3M71.9 12.5L73.6 11.4M71.9 12.5L73.3 10.7M71.9 12.5L74.2 12.3M75.9 17.4L77.1 16.0M75.9 17.4L75.5 15.4M75.9 17.4L76.1 15.8M75.7 17.9L75.3 16.5M75.7 17.9L75.7 16.3M74.7 17.1L75.4 15.8M74.7 17.1L74.4 15.2M73.0 17.1L73.1 15.6M73.0 17.1L72.7 15.4M80.9 20.1L82.5 20.2M80.9 20.1L82.4 18.7M80.9 20.1L82.8 19.5M80.7 18.4L82.1 16.3M80.7 18.4L83.1 16.9M80.7 18.4L82.8 17.1M80.7 19.0L82.4 18.1M80.7 19.0L83.3 18.4M80.5 19.7L82.0 18.7M80.5 19.7L82.5 20.0M44.7 20.7L42.5 20.5M44.7 20.7L41.8 20.7M44.7 21.1L42.4 22.1M44.7 21.1L43.0 20.0M46.0 18.4L44.1 15.9M46.0 18.4L43.5 16.6M47.3 18.2L45.3 17.4M47.3 18.2L47.0 16.3M47.3 18.2L45.5 16.7M46.4 17.6L44.3 16.0M46.4 17.6L44.5 15.0M44.3 24.4L42.1 25.3M44.3 24.4L42.4 26.7M44.3 24.4L41.8 25.6M44.9 24.9L42.9 26.0M44.9 24.9L43.0 24.8M53.8 12.6L54.4 9.5M53.8 12.6L53.0 9.7M54.2 13.2L55.0 11.1M54.2 13.2L53.1 11.1M56.7 13.4L59.1 11.7M56.7 13.4L58.9 12.3M56.7 13.4L58.7 12.3M54.4 14.4L54.4 12.6M54.4 14.4L53.7 12.3M51.8 14.8L50.1 13.7M51.8 14.8L50.0 14.2M54.1 14.4L54.9 12.4M54.1 14.4L54.4 12.3M49.9 16.3L48.0 16.5M49.9 16.3L48.2 15.3M51.0 15.4L51.1 13.7M51.0 15.4L50.0 13.8M51.0 15.4L51.2 13.7M55.7 13.2L56.0 10.8M55.7 13.2L56.7 11.2M54.8 12.9L56.2 10.8M54.8 12.9L55.9 11.3M54.8 12.9L55.0 10.6M52.6 13.5L50.7 12.8M52.6 13.5L52.6 11.6M54.9 12.7L57.1 11.4M54.9 12.7L55.4 10.6M53.8 12.5L54.1 10.0M53.8 12.5L52.5 10.4M53.8 12.5L52.4 10.7M52.8 17.1L53.2 15.1M52.8 17.1L52.8 15.1M50.7 17.4L49.4 16.6M50.7 17.4L49.7 15.9M50.7 17.4L50.1 16.0M49.2 17.8L48.4 16.0M49.2 17.8L47.5 17.2M50.9 17.3L51.0 15.6M50.9 17.3L51.3 15.7M46.9 14.2L46.7 11.7M46.9 14.2L45.4 12.1M46.9 14.2L45.9 11.6M46.5 14.8L44.6 13.6M46.5 14.8L45.1 13.1M48.4 12.9L46.9 9.6M48.4 12.9L48.0 9.7M48.4 12.9L47.4 10.1M44.4 21.2L42.5 23.4M44.4 21.2L42.0 21.5M44.6 19.9L42.5 18.6M44.6 19.9L42.7 18.6M44.6 19.9L42.1 18.9M51.1 14.3L49.8 13.2M51.1 14.3L50.3 12.8M51.1 14.3L51.2 12.4M50.5 14.9L48.9 14.4M50.5 14.9L49.9 13.1M50.5 14.9L48.9 13.9M48.8 13.7L46.0 14.1M48.8 13.7L46.1 12.7M49.1 12.8L47.2 11.3M49.1 12.8L47.7 10.3M49.1 12.8L47.8 11.0M52.9 12.9L51.3 11.5M52.9 12.9L52.4 11.1M52.9 12.9L52.0 11.5M51.1 13.6L49.6 11.8M51.1 13.6L49.2 13.4M52.9 12.6L52.6 10.2M52.9 12.6L51.8 11.0M56.2 9.0L57.6 5.8M56.2 9.0L55.3 5.8M56.2 9.0L55.8 5.8M54.7 10.1L54.2 7.6M54.7 10.1L54.2 7.7M54.7 10.1L54.6 7.6M53.6 9.9L51.0 9.2M53.6 9.9L50.7 8.0M53.6 9.9L50.9 8.8M52.7 12.6L50.7 11.2M52.7 12.6L52.5 10.6M52.1 13.7L50.5 13.6M52.1 13.7L50.3 13.6M52.0 13.7L49.7 13.3M52.0 13.7L50.8 11.7M52.0 13.7L50.1 12.4M51.2 13.9L48.9 12.0M51.2 13.9L48.3 13.5M51.2 13.9L49.6 11.9M60.0 13.0L62.2 12.6M60.0 13.0L62.3 12.8M59.8 12.1L61.1 9.9M59.8 12.1L62.0 10.7M59.8 12.1L59.6 10.0M59.7 12.1L61.6 11.2M59.7 12.1L59.7 9.5M59.7 12.1L60.0 9.8" stroke-width="0.30"/><path d="M64 51 V36" stroke-width="2.200"/></g>
<ellipse cx="64" cy="22" rx="23" ry="19" fill="#15111c" opacity=".2"/>
</svg>
<svg style="left:1363px;top:118px" width="91" height="52" viewBox="0 0 91 52">
<rect width="91" height="52" fill="#3848b0"/>
<path d="M0 2 q20 4 40 10 q26 8 51 9 v20 H0z" fill="#d88a48"/>
<path d="M0 2 q20 4 40 10 q10 3 14 4 q-20 4 -54 6z" fill="#e8a868" opacity=".6"/>
<path d="M0 22 q40 -2 91 4 v10 H0z" fill="#c87a3c" opacity=".6"/>
<rect y="33" width="91" height="19" fill="#eeeae2"/><rect y="33" width="91" height="2" fill="#d8c8b8"/>
<ellipse cx="46" cy="43.500" rx="6" ry="1" fill="#6a6058"/><ellipse cx="55" cy="44" rx="3" ry=".8" fill="#6a6058"/>
<g stroke="#201410" fill="none" stroke-linecap="round"><path d="M27 41 q-1 -10 0 -20" stroke-width="2.200"/><path d="M27 26 q-3 -6 -6 -8 M27 24 q4 -6 5 -12 M28 27 q8 -4 18 -1 M27 22 q-2 -6 -1 -12 M32 20 q4 0 6 3" stroke-width="1"/></g>
</svg>
<svg style="left:1476px;top:118px" width="92" height="52" viewBox="0 0 92 52">
<defs><linearGradient id="s7" x1="0" y1="0" x2="0" y2="1"><stop offset="0" stop-color="#a81a10"/><stop offset=".4" stop-color="#e83a20"/><stop offset=".8" stop-color="#f25228"/><stop offset="1" stop-color="#e04220"/></linearGradient>
<filter id="bl7"><feGaussianBlur stdDeviation="1.2"/></filter><clipPath id="c7"><rect width="92" height="52"/></clipPath></defs>
<rect width="92" height="52" fill="url(#s7)"/>
<g clip-path="url(#c7)"><g filter="url(#bl7)"><path d="M50 -2 q10 10 44 8 V20 q-22 0 -36 -9 q-6 -5 -8 -13z" fill="#7c0e08" opacity=".75"/>
<path d="M0 9 q20 -7 42 0 q-20 5 -42 6z" fill="#fa6a40" opacity=".55"/><path d="M60 30 q16 -4 32 0 v6 h-32z" fill="#f86a38" opacity=".5"/></g>
<path d="M0 23 q10 -2 20 4 q14 6 28 8 q12 3 22 10 q10 6 22 6 V53 H0z" fill="#070303"/>
<g stroke="#0a0505" fill="none" stroke-linecap="round"><path d="M36.0 37.0L32.9 31.9" stroke-width="1.45"/><path d="M32.9 31.9L32.9 27.2M32.9 31.9L28.8 28.3M32.9 31.9L30.3 28.2" stroke-width="1.23"/><path d="M32.9 27.2L35.0 24.1M32.9 27.2L34.1 23.8M32.9 27.2L33.5 22.9M28.8 28.3L25.9 24.5M28.8 28.3L25.3 24.7M30.3 28.2L29.8 24.5M30.3 28.2L30.6 24.3" stroke-width="1.01"/><path d="M35.0 24.1L35.6 20.9M35.0 24.1L37.7 22.0M34.1 23.8L36.2 21.4M34.1 23.8L36.6 22.2M34.1 23.8L36.5 22.4M33.5 22.9L33.3 19.6M33.5 22.9L32.5 19.8M33.5 22.9L35.4 20.5M25.9 24.5L23.4 22.1M25.9 24.5L23.7 21.9M25.3 24.7L23.6 20.7M25.3 24.7L21.9 22.9M25.3 24.7L22.4 21.5M29.8 24.5L29.2 21.6M29.8 24.5L31.1 21.6M30.6 24.3L31.0 21.0M30.6 24.3L29.3 21.2" stroke-width="0.79"/><path d="M35.6 20.9L36.0 18.5M35.6 20.9L34.7 18.5M35.6 20.9L37.1 18.9M37.7 22.0L40.4 20.4M37.7 22.0L39.9 20.7M36.2 21.4L39.0 20.8M36.2 21.4L37.0 18.9M36.2 21.4L37.3 19.5M36.6 22.2L37.8 20.1M36.6 22.2L37.8 20.5M36.5 22.4L38.5 21.3M36.5 22.4L37.7 20.4M33.3 19.6L34.6 17.7M33.3 19.6L32.1 17.1M32.5 19.8L33.4 17.6M32.5 19.8L32.8 16.9M35.4 20.5L37.6 19.0M35.4 20.5L37.9 19.4M23.4 22.1L20.8 21.5M23.4 22.1L20.8 20.7M23.7 21.9L21.6 20.1M23.7 21.9L20.9 20.9M23.6 20.7L20.6 19.1M23.6 20.7L20.7 19.2M23.6 20.7L21.9 17.9M21.9 22.9L19.4 21.0M21.9 22.9L18.7 21.7M21.9 22.9L20.1 19.9M22.4 21.5L20.2 18.9M22.4 21.5L19.3 20.2M22.4 21.5L21.6 18.3M29.2 21.6L29.8 18.9M29.2 21.6L27.5 19.6M31.1 21.6L33.1 20.5M31.1 21.6L31.4 19.2M31.1 21.6L32.0 19.1M31.0 21.0L32.6 18.9M31.0 21.0L30.1 18.6M31.0 21.0L31.1 18.1M29.3 21.2L27.7 19.2M29.3 21.2L27.3 19.7" stroke-width="0.57"/><path d="M36.0 18.5L37.2 17.1M36.0 18.5L36.8 16.6M36.0 18.5L35.8 16.5M34.7 18.5L33.0 17.1M34.7 18.5L33.3 17.2M37.1 18.9L37.9 17.1M37.1 18.9L38.8 18.2M37.1 18.9L39.2 18.2M40.4 20.4L41.7 18.5M40.4 20.4L42.6 20.7M39.9 20.7L41.7 20.8M39.9 20.7L40.4 18.9M39.9 20.7L41.8 20.3M39.0 20.8L40.4 19.1M39.0 20.8L41.0 21.6M37.0 18.9L37.6 16.7M37.0 18.9L36.2 16.6M37.3 19.5L37.8 17.7M37.3 19.5L39.1 18.7M37.3 19.5L37.7 17.8M37.8 20.1L39.1 18.4M37.8 20.1L38.6 18.3M37.8 20.1L39.3 19.2M37.8 20.5L39.2 19.7M37.8 20.5L39.2 19.8M38.5 21.3L40.3 21.4M38.5 21.3L39.9 19.9M37.7 20.4L38.7 18.9M37.7 20.4L39.5 19.3M34.6 17.7L34.8 15.7M34.6 17.7L35.5 15.8M32.1 17.1L31.8 14.6M32.1 17.1L32.0 15.0M33.4 17.6L33.6 15.6M33.4 17.6L32.8 15.4M32.8 16.9L32.1 14.8M32.8 16.9L31.6 15.0M37.6 19.0L39.0 17.1M37.6 19.0L39.0 17.2M37.9 19.4L40.1 18.7M37.9 19.4L39.0 17.8M37.9 19.4L40.1 19.3M20.8 21.5L18.7 22.3M20.8 21.5L18.7 21.5M20.8 20.7L18.6 21.1M20.8 20.7L19.7 18.4M21.6 20.1L19.8 19.3M21.6 20.1L19.5 19.5M21.6 20.1L19.3 19.2M20.9 20.9L18.5 20.9M20.9 20.9L18.8 20.2M20.9 20.9L19.4 19.3M20.6 19.1L17.7 18.3M20.6 19.1L19.1 17.2M20.7 19.2L17.7 19.7M20.7 19.2L17.9 18.6M20.7 19.2L17.8 18.9M21.9 17.9L21.2 15.4M21.9 17.9L21.7 15.6M19.4 21.0L17.7 19.4M19.4 21.0L16.9 20.7M18.7 21.7L16.1 20.5M18.7 21.7L16.9 19.9M18.7 21.7L16.4 20.2M20.1 19.9L17.7 19.1M20.1 19.9L20.2 16.7M20.2 18.9L17.2 18.2M20.2 18.9L18.8 16.9M19.3 20.2L16.3 20.9M19.3 20.2L16.6 19.8M21.6 18.3L21.7 15.9M21.6 18.3L20.1 16.2M29.8 18.9L29.6 16.4M29.8 18.9L30.8 17.1M27.5 19.6L25.7 18.8M27.5 19.6L26.1 18.2M33.1 20.5L34.8 19.8M33.1 20.5L34.8 20.9M31.4 19.2L31.9 17.3M31.4 19.2L32.2 17.2M31.4 19.2L30.5 17.1M32.0 19.1L33.2 17.5M32.0 19.1L31.6 17.1M32.6 18.9L33.2 16.9M32.6 18.9L32.6 16.6M32.6 18.9L33.2 16.8M30.1 18.6L28.4 17.1M30.1 18.6L29.4 16.5M30.1 18.6L30.2 16.8M31.1 18.1L31.7 15.8M31.1 18.1L31.5 16.0M27.7 19.2L25.8 18.6M27.7 19.2L26.3 17.8M27.3 19.7L25.5 19.4M27.3 19.7L25.5 18.6" stroke-width="0.35"/><path d="M54.0 36.0L57.9 32.9" stroke-width="1.23"/><path d="M57.9 32.9L61.2 31.2M57.9 32.9L61.9 30.7" stroke-width="1.01"/><path d="M61.2 31.2L64.1 31.7M61.2 31.2L64.3 31.3M61.9 30.7L64.5 28.5M61.9 30.7L65.9 30.6" stroke-width="0.79"/><path d="M64.1 31.7L65.9 33.5M64.1 31.7L65.8 33.4M64.3 31.3L67.1 31.1M64.3 31.3L66.1 29.9M64.3 31.3L66.4 29.8M64.5 28.5L66.7 27.5M64.5 28.5L67.3 28.0M65.9 30.6L68.6 29.4M65.9 30.6L68.9 29.6M65.9 30.6L68.7 30.9" stroke-width="0.57"/><path d="M65.9 33.5L66.2 35.5M65.9 33.5L66.4 35.6M65.8 33.4L67.5 34.2M65.8 33.4L67.5 33.7M67.1 31.1L68.8 32.4M67.1 31.1L69.4 31.3M67.1 31.1L68.7 29.8M66.1 29.9L66.6 28.3M66.1 29.9L66.9 28.5M66.4 29.8L67.4 28.0M66.4 29.8L67.7 28.4M66.4 29.8L67.6 28.2M66.7 27.5L69.0 27.7M66.7 27.5L68.7 27.1M67.3 28.0L69.4 29.1M67.3 28.0L69.6 26.9M68.6 29.4L71.0 29.4M68.6 29.4L71.0 28.1M68.6 29.4L71.1 29.8M68.9 29.6L70.9 28.5M68.9 29.6L71.1 28.0M68.7 30.9L70.8 30.7M68.7 30.9L70.6 30.3M68.7 30.9L70.4 32.2" stroke-width="0.35"/></g></g>
</svg>
<!-- labels -->
<div class="t lab" style="left:788px;letter-spacing:-0.22px">Sample_360.m...</div>
<div class="t lab" style="left:901px;letter-spacing:-0.3px">Sample_Lake....</div>
<div class="t lab" style="left:1014px">BG-B01.jpg</div>
<div class="t lab" style="left:1127px">BG-B02.jpg</div>
<div class="t lab" style="left:1240px">BG-B03.jpg</div>
<div class="t lab" style="left:1353px">BG-B04.jpg</div>
<div class="t lab" style="left:1466px">BG-B05.jpg</div>
<!-- selected -->
<div class="a" style="left:788px;top:202px;width:111px;height:96px;background:#c3c7e0"></div>
<div class="a" style="left:799px;top:207px;width:88px;height:70px;background:#000;box-shadow:3px 3px 4px rgba(40,40,70,.55)"></div>
<svg style="left:799px;top:207px" width="88" height="70" viewBox="0 0 88 70">
<path d="M27 2 V68" stroke="#f0f0f0" stroke-width="1.300"/>
<g fill="none" stroke="#d8d8d8" stroke-width=".9"><ellipse cx="44.500" cy="18" rx="6" ry="7"/><ellipse cx="69.500" cy="19.500" rx="6" ry="7.500"/><ellipse cx="46" cy="52" rx="6.500" ry="7.500"/><ellipse cx="71.500" cy="53.500" rx="7" ry="8.500"/></g>
<g fill="#f2f2f2" font-family="Liberation Sans, sans-serif" text-anchor="middle">
<text x="13.500" y="41.200" font-size="16.500">1</text>
<text x="57" y="49" font-size="37.500" stroke="#f2f2f2" stroke-width="1.100">2</text>
<text x="44.500" y="24" font-size="17">3</text><text x="69.500" y="25.500" font-size="17">4</text><text x="46" y="58.500" font-size="17.500">5</text><text x="71.500" y="60" font-size="17.500">6</text>
</g>
</svg>
<div class="t" style="left:788px;top:278px;width:111px;text-align:center;font-size:14.500px;line-height:20px;color:#0a0a0a;letter-spacing:-0.1px">SplitScreen01.v...</div>

<!-- ============ TIMELINE PANEL ============ -->
<div id="tl" class="a"></div>
<div class="a dots" style="left:4px;top:462px;width:45px"></div>
<!-- toolbar row -->
<div class="a" style="left:0;top:470px;width:1600px;height:33px;background:#232a41"></div>
<div class="a" style="left:71px;top:471px;width:65px;height:30px;background:#171c2b"></div>
<div class="a" style="left:66px;top:471px;width:1px;height:30px;background:#2a3149"></div>
<div class="a" style="left:203px;top:472px;width:1px;height:24px;background:#1a1f30"></div>
<svg style="left:0;top:470px" width="1600" height="33" viewBox="0 470 1600 33" fill="#d0d4e2" stroke="none">
<!-- storyboard -->
<path d="M24 477.500 h21 q1.500 0 1.500 1.500 v13.500 q0 1.500 -1.500 1.500 h-21 q-1.500 0 -1.500 -1.500 v-13.500 q0 -1.500 1.500 -1.500z M24 479 v1.800 h2 v-1.800z M27.800 479 v1.800 h2 v-1.800z M31.600 479 v1.800 h2 v-1.800z M35.400 479 v1.800 h2 v-1.800z M39.200 479 v1.800 h2 v-1.800z M43 479 v1.800 h2 v-1.800z M24 490.700 v1.800 h2 v-1.800z M27.800 490.700 v1.800 h2 v-1.800z M31.600 490.700 v1.800 h2 v-1.800z M35.400 490.700 v1.800 h2 v-1.800z M39.200 490.700 v1.800 h2 v-1.800z M43 490.700 v1.800 h2 v-1.800z M24.500 482.500 v6.500 h8.800 v-6.500z M35.500 482.500 v6.500 h9 v-6.500z" fill-rule="evenodd"/>
<!-- timeline view (active) -->
<g fill="#1a9ff5"><path d="M94 477 h19 q2 0 2 2 v6 h-23 v-6 q0 -2 2 -2z M104.500 479.500 h6.500 l-3.250 3.800z" fill-rule="evenodd"/><rect x="92" y="486.500" width="23" height="3.300"/><path d="M92 491.500 h23 v1 q0 2 -2 2 h-19 q-2 0 -2 -2z"/></g>
<!-- tools -->
<g stroke="#d0d4e2" stroke-width="2.600" stroke-linecap="round" fill="none"><path d="M183.500 480.500 L194.500 491.500"/><path d="M194 479 L183 491.500"/></g>
<path d="M180 477 l2.500 -0.500 3 3 -1 3.500 -3.500 1 -3 -3 .5 -2.500 2.500 2.300 1.500 -1.500z"/><path d="M198 494.500 l-2.500 .5 -3 -3 1 -3.500 3.500 -1 3 3 -.5 2.500 -2.500 -2.300 -1.500 1.500z"/>
<path d="M192.500 477.500 l3 -1.500 2 2 -1.500 3z"/><path d="M181 493.500 l3.200 -1.200 -2 -2z"/>
<!-- undo -->
<path d="M222.500 484.500 l7.500 -6.500 v4 q9 0.500 9 8.500 q0 2.500 -1.500 4.500 q-.5 -6.500 -7.500 -6.500 v4z"/>
<!-- redo dim -->
<path d="M293.500 484.500 l-7.500 -6.500 v4 q-9 0.500 -9 8.500 q0 2.500 1.500 4.500 q.5 -6.500 7.500 -6.500 v4z" fill="#4d5876"/>
<!-- fit arrows |<-->| -->
<g stroke="#d0d4e2" stroke-width="1.800" fill="none"><path d="M330 476.500 V493.500 M351 476.500 V493.500"/><path d="M332.500 485 H339.500 M335.500 482 l-3 3 3 3 M348.500 485 H341.500 M345.500 482 l3 3 -3 3" stroke-width="1.400"/></g>
<!-- box arrows -->
<g stroke="#d0d4e2" fill="none"><rect x="384.500" y="477" width="21.500" height="16.500" stroke-width="2"/><path d="M388.500 482.500 h7.500 M391 480.500 l-2.500 2 2.500 2 M402 488.500 h-7.500 M399.500 486.500 l2.500 2 -2.500 2" stroke-width="1.100"/></g>
<!-- split <-|-> -->
<g stroke="#d0d4e2" fill="none" stroke-width="1.600"><path d="M450.500 477 V493.500" stroke-width="2"/><path d="M447.500 485 H439.500 M443.500 481 l-4 4 4 4 M453.500 485 H461.500 M457.500 481 l4 4 -4 4"/></g>
<!-- <-[]-> -->
<g stroke="#d0d4e2" fill="none" stroke-width="1.600"><rect x="500.500" y="478" width="10" height="14.500" rx="1.500" stroke-width="1.800"/><path d="M499 485 H493 M496 482 l-3 3 3 3 M512 485 H518 M515 482 l3 3 -3 3" stroke-width="1.300"/></g>
<!-- reel + rec -->
<path d="M560.500 478 a8 8 0 1 0 0.010 0z M560.500 480 a2 2 0 1 1 -0.010 0z M555.700 483.500 a2 2 0 1 1 -0.010 0z M565.300 483.500 a2 2 0 1 1 -0.010 0z M557.500 489 a2 2 0 1 1 -0.010 0z M563.500 489 a2 2 0 1 1 -0.010 0z" fill-rule="evenodd"/>
<circle cx="568" cy="490" r="4.600" fill="#e0101c"/>
<!-- music wave -->
<ellipse cx="606.500" cy="490" rx="2.500" ry="2"/><ellipse cx="612.500" cy="488.500" rx="2.500" ry="2"/><path d="M607.500 490 V480.500 l7.500 -1.500 V488.500 h-1.500 V482 l-4.500 1 V490z"/>
<g stroke="#d0d4e2" stroke-width="1.500" fill="none"><path d="M616 484 V491 M618.300 480 V495 M620.600 483 V492 M622.900 478.500 V494 M625 485 V490"/></g>
<!-- film music -->
<path d="M659 479 h12 v15 h-12z M660.200 480.300 v1.800 h1.800 v-1.800z M660.200 483.800 v1.800 h1.800 v-1.800z M660.200 487.300 v1.800 h1.800 v-1.800z M660.200 490.800 v1.800 h1.800 v-1.800z M668 480.300 v1.800 h1.800 v-1.800z M668 483.800 v1.800 h1.800 v-1.800z M668 487.300 v1.800 h1.800 v-1.800z M668 490.800 v1.800 h1.800 v-1.800z M663 480.500 v5.500 h4 v-5.500z M663 487.500 v5.500 h4 v-5.500z" fill-rule="evenodd"/>
<path d="M672.500 479 h8 v15 h-8z M678 480.300 v1.800 h1.700 v-1.800z M678 483.800 v1.800 h1.700 v-1.800z M678 487.300 v1.800 h1.700 v-1.800z M678 490.800 v1.800 h1.700 v-1.800z" fill-rule="evenodd"/>
<g fill="#232a41"><rect x="666" y="482" width="12" height="11"/></g>
<ellipse cx="668.500" cy="491" rx="2.300" ry="1.800"/><ellipse cx="674.500" cy="489.500" rx="2.300" ry="1.800"/><path d="M669.500 491 V482 l6.800 -1.500 V489.500 h-1.400 V483.500 l-4 .9 V491z"/>
<!-- discs -->
<circle cx="717.500" cy="484.500" r="6.500"/><circle cx="711.500" cy="487" r="6.500" stroke="#232a41" stroke-width="1.200"/><circle cx="706" cy="489.500" r="5.800" stroke="#232a41" stroke-width="1.200"/>
<!-- text box -->
<path d="M756 478.500 h20 q1.500 0 1.500 1.500 v12.500 q0 1.500 -1.500 1.500 h-20 q-1.500 0 -1.500 -1.500 v-12.500 q0 -1.500 1.500 -1.500z M757.500 481.500 v2.500 h3 v7 h-1.500 v1.500 h5.500 v-1.500 h-1.500 v-7 h3 v-2.500z M768 482.300 v1.500 h7 v-1.500z M768 485.500 v1.500 h7 v-1.500z M768 488.700 v1.500 h7 v-1.500z M765 491.500 v1 h10 v-1z" fill-rule="evenodd"/>
<!-- grid -->
<g stroke="#d0d4e2" stroke-width="1.800" fill="none"><rect x="811.500" y="479.500" width="20.500" height="14"/><path d="M811.500 486.500 H832 M821.700 479.500 V493.500" stroke-width="1.500"/></g>
<!-- runner -->
<circle cx="884.500" cy="478" r="2.200"/>
<g stroke="#d0d4e2" stroke-width="2.200" fill="none" stroke-linecap="round" stroke-linejoin="round"><path d="M876.500 482 l5 -1.500 3 2 2.500 3.500 3 0"/><path d="M881.500 481 l-1 6.500 4 2.500 -1 4.500"/><path d="M880.500 487.500 l-2.500 4 -4 0"/></g>
<g stroke="#d0d4e2" stroke-width="1.500"><path d="M866.500 479.500 h9 M866.500 483 h7 M866.500 486.500 h9"/></g>
<!-- lasso -->
<path d="M923 483 q3 -6 10 -4.500 q7 -1 9.500 5 q1.500 6 -4.500 9.500 q-5 3 -8.500 -1.500 q-6 -1 -7.500 -5 q-.5 -2 1 -3.500z" fill="none" stroke="#d0d4e2" stroke-width="1.500"/>
<g><circle cx="923" cy="483" r="1.500"/><circle cx="933" cy="478.500" r="1.500"/><circle cx="942.500" cy="483.500" r="1.500"/><circle cx="942" cy="489" r="1.500"/><circle cx="936" cy="494" r="1.500"/><circle cx="929.500" cy="491.500" r="1.500"/><circle cx="922" cy="487" r="1.500"/></g>
<!-- focus -->
<g stroke="#d0d4e2" stroke-width="2" fill="none"><path d="M972 482.500 V478 H977 M986 478 H991 V482.500 M991 489 V493.500 H986 M977 493.500 H972 V489"/><rect x="976.500" y="481.500" width="10" height="8.500" stroke-width="1" stroke-dasharray="1.200 1"/><path d="M981.500 483.500 v4.500 M979.300 485.700 h4.500" stroke-width="1"/></g>
<!-- T3D -->
<path d="M1024 477 h14.500 v3.300 h-5.300 v13.700 h-3.800 v-13.700 h-5.400z"/>
<!-- mask pen -->
<path d="M1087.500 477.500 h17 v8 l-6 7 h-11z"/><path d="M1089 479 l7 6 7 -6" stroke="#232a41" stroke-width="1.400" fill="none"/>
<path d="M1106 483 l2.500 2.500 -7 7.500 -3.500 1 1 -3.500z" stroke="#232a41" stroke-width=".8"/>
<!-- film pen -->
<path d="M1139 478 h20 v16.500 h-20z M1140.300 479.200 v1.500 h2 v-1.500z M1144 479.200 v1.500 h2 v-1.500z M1147.700 479.200 v1.500 h2 v-1.500z M1151.400 479.200 v1.500 h2 v-1.500z M1155.100 479.200 v1.500 h2 v-1.500z M1140.300 491.800 v1.500 h2 v-1.500z M1144 491.800 v1.500 h2 v-1.500z M1147.700 491.800 v1.500 h2 v-1.500z M1151.400 491.800 v1.500 h2 v-1.500z M1155.100 491.800 v1.500 h2 v-1.500z M1141 482 v8.500 h16 v-8.500z" fill-rule="evenodd"/>
<path d="M1142.500 483.500 h3.500 v6 h-3.500z" opacity=".7"/>
<path d="M1159.500 477.500 l2.300 2.300 -11.500 10.500 -3.300 1 1 -3.300z" stroke="#232a41" stroke-width=".7"/>
<!-- zoom out -->
<g stroke="#d0d4e2" fill="none"><circle cx="1285" cy="484" r="6" stroke-width="1.600"/><path d="M1289.500 488.500 l5.500 5.500" stroke-width="2"/><path d="M1281.500 484 h7" stroke-width="1.800"/></g>
<rect x="1307" y="483" width="72" height="4" fill="#000"/>
<path d="M1354 480.500 h7 v7.500 l-3.500 4 -3.500 -4z" fill="#c9ccd8"/>
<g stroke="#d0d4e2" fill="none"><circle cx="1398.500" cy="484" r="6" stroke-width="1.600"/><path d="M1403 488.500 l5.500 5.500" stroke-width="2"/><path d="M1395 484 h7 M1398.500 480.500 v7" stroke-width="1.800"/></g>
<g stroke="#d0d4e2" fill="none"><rect x="1427" y="480" width="15" height="11.500" stroke-width="1.200"/><path d="M1430 485.700 h9 M1432 483.700 l-2 2 2 2 M1437 483.700 l2 2 -2 2" stroke-width="1.200"/></g>
<circle cx="1468.500" cy="485.500" r="7.700"/><path d="M1468.500 479.500 V485.500 L1473 489" stroke="#232a41" stroke-width="1.600" fill="none"/>
<rect x="1486" y="477" width="102" height="18" fill="#161b2b"/>
</svg>
<div class="t" style="left:1037.500px;top:483px;font-size:11.500px;line-height:13px;color:#d0d4e2;letter-spacing:-0.9px">3D</div>
<div class="t" style="left:1495px;top:477px;font-family:'Liberation Mono','DejaVu Sans Mono',monospace;font-size:14.500px;line-height:18px;color:#d5d8e4;letter-spacing:-1.850px;word-spacing:-3px">0:00: 10:000</div>
<!-- ruler -->
<div class="a" style="left:0;top:503px;width:1600px;height:35px;background:#232a41"></div>
<div class="a" style="left:0;top:503px;width:199px;height:35px;background:#181d2c"></div>
<div class="a" style="left:199px;top:503px;width:1401px;height:25px;background:#181d2c"></div>
<svg style="left:0;top:503px" width="1600" height="35" viewBox="0 503 1600 35">
<path d="M199 526.500 H1577" stroke="#5a6078" stroke-width="1"/>
<path d="M199.5 508 V527 M349.5 508 V527 M499.5 508 V527 M649.5 508 V527 M799.5 508 V527 M949.5 508 V527 M1099.5 508 V527 M1249.5 508 V527 M1399.5 508 V527 M1549.5 508 V527 M274.5 514 V527 M424.5 514 V527 M574.5 514 V527 M724.5 514 V527 M874.5 514 V527 M1024.5 514 V527 M1174.5 514 V527 M1324.5 514 V527 M1474.5 514 V527 M1576.500 504 V527" stroke="#6a7088" stroke-width="1" fill="none"/>
<path d="M745.500 505 V527" stroke="#f0f0f0" stroke-width="1.400"/>
<path d="M193 507 h8 v8 l-4 4.500 -4 -4.500z" fill="#e6dfcc"/><path d="M199 507 h2 v8 l-2 2.200z" fill="#b8b09a"/>
<!-- track tools -->
<g fill="#d0d4e2"><rect x="28.500" y="515.500" width="9" height="2.300"/><rect x="28.500" y="519.200" width="9" height="2.300"/><rect x="28.500" y="522.900" width="9" height="2.300"/>
<path d="M24 515 h2.500 v1 h-1.300 v8.500 h1.300 v1 h-2.500z"/>
<path d="M40.700 514.500 v3 M39 516 l1.700 1.800 1.700 -1.800 M40.700 526 v-3 M39 524.500 l1.700 -1.800 1.700 1.800" stroke="#d0d4e2" stroke-width="1.100" fill="none"/>
<rect x="77" y="515.500" width="9.500" height="2.300"/><rect x="77" y="519.200" width="9.500" height="2.300"/><rect x="77" y="522.900" width="9.500" height="2.300"/>
<path d="M88.500 517 h4.500 M90.750 514.800 v4.500 M88.500 523.500 h4.500" stroke="#d0d4e2" stroke-width="1.100" fill="none"/>
<path d="M131 519 h5 l-2.500 3z"/></g>
<path d="M119 524.500 l6 -9.500 6 9.500z" fill="#1fe07a"/>
</svg>
<div class="t rl" style="left:201px">00:00:00:00</div>
<div class="t rl" style="left:351px">00:00:02:00</div>
<div class="t rl" style="left:501px">00:00:04:00</div>
<div class="t rl" style="left:651px">00:00:06:00</div>
<div class="t rl" style="left:801px">00:00:08:00</div>
<div class="t rl" style="left:951px">00:00:10:00</div>
<div class="t rl" style="left:1101px">00:00:12:00</div>
<div class="t rl" style="left:1251px">00:00:14:00</div>
<div class="t rl" style="left:1401px">00:00:16:00</div>
<div class="t rl" style="left:1551px;width:26px;overflow:hidden">00:00:18:00</div>
<!-- tracks -->
<div class="a" style="left:0;top:538px;width:1576px;height:298px;background:#171b29"></div>
<div class="a" style="left:0;top:538px;width:198px;height:299px;background:#252c44"></div>
<div class="a" style="left:0;top:538px;width:1px;height:301px;background:#141826"></div>
<div class="a" style="left:50px;top:538px;width:1px;height:301px;background:#2b324b"></div>
<div class="a" style="left:0;top:598px;width:198px;height:2px;background:#161a28"></div>
<div class="a" style="left:198px;top:598px;width:1378px;height:1px;background:#272d42"></div>
<div class="a" style="left:0;top:659px;width:198px;height:2px;background:#161a28"></div>
<div class="a" style="left:198px;top:659px;width:1378px;height:1px;background:#272d42"></div>
<div class="a" style="left:0;top:720px;width:198px;height:2px;background:#161a28"></div>
<div class="a" style="left:198px;top:720px;width:1378px;height:1px;background:#272d42"></div>
<div class="a" style="left:0;top:781px;width:198px;height:2px;background:#161a28"></div>
<div class="a" style="left:198px;top:781px;width:1378px;height:1px;background:#272d42"></div>
<div class="a" style="left:0;top:836px;width:198px;height:1px;background:#161a28"></div>
<div class="a" style="left:201px;top:600px;width:746px;height:58px;background:#116a5a;border-radius:0 2px 2px 0"></div>
<div class="a" style="left:201px;top:600px;width:103px;height:58px;background:#000"></div>
<div class="a" style="left:201px;top:658px;width:746px;height:2px;background:#1b2336"></div>
<div class="t" style="left:309px;top:623px;font-size:12px;line-height:15px;color:#eefafa">PlaceHolder.png</div>
<div class="a" style="left:207px;top:625px;width:15px;height:12px;background:#1a2030"></div>
<div class="t" style="left:207px;top:625px;width:15px;text-align:center;font-size:9.500px;line-height:12px;font-weight:bold;color:#ea722c;letter-spacing:-0.5px">FX</div>
<div class="a" style="left:207px;top:639px;width:15px;height:12px;background:#1a2030"></div>
<svg style="left:205px;top:602px" width="24" height="50" viewBox="0 0 24 50"><path d="M11.500 1 l2.800 5.800 6.200 .8 -4.600 4.300 1.200 6.300 -5.600 -3.100 -5.600 3.100 1.200 -6.300 -4.600 -4.300 6.200 -.8z" fill="#f9b81c"/><path d="M3 20 l1.200 -6.500 1.800 1.800 3.500 -3.500 1.800 1.800 -3.500 3.500 1.800 1.800z" fill="#f9a01c" stroke="#000" stroke-width=".5" transform="rotate(180 6.500 16.500) translate(0 0)"/><rect x="4.500" y="39" width="2.600" height="2.600" fill="#b8d430"/><rect x="11.800" y="43.800" width="2.800" height="2.800" fill="#b8d430"/><path d="M5.800 41 V45.200 H12" stroke="#b8d430" stroke-width="1.100" fill="none"/></svg>
<div class="a" style="left:201px;top:661px;width:746px;height:58px;background:#116a5a;border-radius:0 2px 2px 0"></div>
<div class="a" style="left:201px;top:661px;width:103px;height:58px;background:#000"></div>
<div class="a" style="left:201px;top:719px;width:746px;height:2px;background:#1b2336"></div>
<div class="t" style="left:309px;top:684px;font-size:12px;line-height:15px;color:#eefafa">PlaceHolder.png</div>
<div class="a" style="left:207px;top:686px;width:15px;height:12px;background:#1a2030"></div>
<div class="t" style="left:207px;top:686px;width:15px;text-align:center;font-size:9.500px;line-height:12px;font-weight:bold;color:#ea722c;letter-spacing:-0.5px">FX</div>
<div class="a" style="left:207px;top:700px;width:15px;height:12px;background:#1a2030"></div>
<svg style="left:205px;top:663px" width="24" height="50" viewBox="0 0 24 50"><path d="M11.500 1 l2.800 5.800 6.200 .8 -4.600 4.300 1.200 6.300 -5.600 -3.100 -5.600 3.100 1.200 -6.300 -4.600 -4.300 6.200 -.8z" fill="#f9b81c"/><path d="M3 20 l1.200 -6.500 1.800 1.800 3.500 -3.500 1.800 1.800 -3.500 3.500 1.800 1.800z" fill="#f9a01c" stroke="#000" stroke-width=".5" transform="rotate(180 6.500 16.500) translate(0 0)"/><rect x="4.500" y="39" width="2.600" height="2.600" fill="#b8d430"/><rect x="11.800" y="43.800" width="2.800" height="2.800" fill="#b8d430"/><path d="M5.800 41 V45.200 H12" stroke="#b8d430" stroke-width="1.100" fill="none"/></svg>
<div class="a" style="left:201px;top:722px;width:746px;height:58px;background:#116a5a;border-radius:0 2px 2px 0"></div>
<div class="a" style="left:201px;top:722px;width:103px;height:58px;background:#000"></div>
<div class="a" style="left:201px;top:780px;width:746px;height:2px;background:#1b2336"></div>
<div class="t" style="left:309px;top:745px;font-size:12px;line-height:15px;color:#eefafa">PlaceHolder.png</div>
<div class="a" style="left:207px;top:747px;width:15px;height:12px;background:#1a2030"></div>
<div class="t" style="left:207px;top:747px;width:15px;text-align:center;font-size:9.500px;line-height:12px;font-weight:bold;color:#ea722c;letter-spacing:-0.5px">FX</div>
<div class="a" style="left:207px;top:761px;width:15px;height:12px;background:#1a2030"></div>
<svg style="left:205px;top:724px" width="24" height="50" viewBox="0 0 24 50"><path d="M11.500 1 l2.800 5.800 6.200 .8 -4.600 4.300 1.200 6.300 -5.600 -3.100 -5.600 3.100 1.200 -6.300 -4.600 -4.300 6.200 -.8z" fill="#f9b81c"/><path d="M3 20 l1.200 -6.500 1.800 1.800 3.500 -3.500 1.800 1.800 -3.500 3.500 1.800 1.800z" fill="#f9a01c" stroke="#000" stroke-width=".5" transform="rotate(180 6.500 16.500) translate(0 0)"/><rect x="4.500" y="39" width="2.600" height="2.600" fill="#b8d430"/><rect x="11.800" y="43.800" width="2.800" height="2.800" fill="#b8d430"/><path d="M5.800 41 V45.200 H12" stroke="#b8d430" stroke-width="1.100" fill="none"/></svg>
<div class="a" style="left:201px;top:783px;width:746px;height:54px;background:#116a5a;border-radius:0 2px 2px 0"></div>
<div class="a" style="left:201px;top:783px;width:103px;height:54px;background:#000"></div>
<div class="t" style="left:309px;top:806px;font-size:12px;line-height:15px;color:#eefafa">PlaceHolder.png</div>
<div class="a" style="left:207px;top:808px;width:15px;height:12px;background:#1a2030"></div>
<div class="t" style="left:207px;top:808px;width:15px;text-align:center;font-size:9.500px;line-height:12px;font-weight:bold;color:#ea722c;letter-spacing:-0.5px">FX</div>
<div class="a" style="left:207px;top:822px;width:15px;height:12px;background:#1a2030"></div>
<svg style="left:205px;top:785px" width="24" height="50" viewBox="0 0 24 50"><path d="M11.500 1 l2.800 5.800 6.200 .8 -4.600 4.300 1.200 6.300 -5.600 -3.100 -5.600 3.100 1.200 -6.300 -4.600 -4.300 6.200 -.8z" fill="#f9b81c"/><path d="M3 20 l1.200 -6.500 1.800 1.800 3.500 -3.500 1.800 1.800 -3.500 3.500 1.800 1.800z" fill="#f9a01c" stroke="#000" stroke-width=".5" transform="rotate(180 6.500 16.500) translate(0 0)"/><rect x="4.500" y="39" width="2.600" height="2.600" fill="#b8d430"/><rect x="11.800" y="43.800" width="2.800" height="2.800" fill="#b8d430"/><path d="M5.800 41 V45.200 H12" stroke="#b8d430" stroke-width="1.100" fill="none"/></svg>
<div class="t" style="left:59px;top:547px;font-size:16px;line-height:20px;color:#d0d4e2">视频</div>
<svg style="left:6px;top:562px" width="23" height="14" viewBox="0 0 23 14"><rect x="0.700" y="0.800" width="15" height="12" rx="2" fill="#d0d4e2"/><path d="M16.500 5 L21.300 1.500 V12 L16.500 8.500z" fill="#d0d4e2"/><path d="M6 3.800 L11 6.800 L6 9.800z" fill="#252c44"/></svg>
<svg style="left:60px;top:570px" width="120" height="16" viewBox="0 0 120 16"><g fill="none" stroke="#d0d4e2" stroke-width="1.700" transform="translate(.5 2) scale(.94)"><rect x="5.500" y="6" width="7.500" height="4.600" rx="2.300" transform="rotate(-45 9 8.500)"/><rect x="10.500" y="1.500" width="7.500" height="4.600" rx="2.300" transform="rotate(-45 14 4)"/></g><path d="M20.500 11.500 h5.500 l-2.750 3.500z" fill="#d0d4e2"/><path d="M51.500 5.500 h3.500 l4.500 -3.700 v12 l-4.500 -3.700 h-3.500z" fill="#d0d4e2"/><g fill="none" stroke="#d0d4e2" stroke-width="1.500"><path d="M62 5 q1.700 2.800 0 5.600"/><path d="M64.800 2.800 q3.200 5 0 10"/></g><path d="M102.0 1.5 h2.100 v2.100 h-2.100z M106.2 1.5 h2.100 v2.100 h-2.100z M110.4 1.5 h2.100 v2.100 h-2.100z M104.1 3.6 h2.100 v2.100 h-2.100z M108.3 3.6 h2.100 v2.100 h-2.100z M112.5 3.6 h2.100 v2.100 h-2.100z M102.0 5.7 h2.100 v2.100 h-2.100z M106.2 5.7 h2.100 v2.100 h-2.100z M110.4 5.7 h2.100 v2.100 h-2.100z M104.1 7.8 h2.100 v2.100 h-2.100z M108.3 7.8 h2.100 v2.100 h-2.100z M112.5 7.8 h2.100 v2.100 h-2.100z M102.0 9.9 h2.100 v2.100 h-2.100z M106.2 9.9 h2.100 v2.100 h-2.100z M110.4 9.9 h2.100 v2.100 h-2.100z M104.1 12.0 h2.100 v2.100 h-2.100z M108.3 12.0 h2.100 v2.100 h-2.100z M112.5 12.0 h2.100 v2.100 h-2.100z " fill="#dfe2ec"/></svg>
<div class="t" style="left:59px;top:608px;font-size:16px;line-height:20px;color:#d0d4e2">叠加1</div>
<svg style="left:6px;top:623px" width="23" height="14" viewBox="0 0 23 14"><rect x="0.700" y="0.800" width="15" height="12" rx="2" fill="#d0d4e2"/><path d="M16.500 5 L21.300 1.500 V12 L16.500 8.500z" fill="#d0d4e2"/></svg>
<div class="t" style="left:7px;top:624px;width:15px;text-align:center;font-size:10.500px;line-height:12px;font-weight:bold;color:#252c44">1</div>
<svg style="left:60px;top:631px" width="120" height="16" viewBox="0 0 120 16"><g fill="none" stroke="#4d5876" stroke-width="1.700" transform="translate(.5 2) scale(.94)"><rect x="5.500" y="6" width="7.500" height="4.600" rx="2.300" transform="rotate(-45 9 8.500)"/><rect x="10.500" y="1.500" width="7.500" height="4.600" rx="2.300" transform="rotate(-45 14 4)"/></g><path d="M51.500 5.500 h3.500 l4.500 -3.700 v12 l-4.500 -3.700 h-3.500z" fill="#d0d4e2"/><g fill="none" stroke="#d0d4e2" stroke-width="1.500"><path d="M62 5 q1.700 2.800 0 5.600"/><path d="M64.800 2.800 q3.200 5 0 10"/></g><path d="M102.0 1.5 h2.100 v2.100 h-2.100z M106.2 1.5 h2.100 v2.100 h-2.100z M110.4 1.5 h2.100 v2.100 h-2.100z M104.1 3.6 h2.100 v2.100 h-2.100z M108.3 3.6 h2.100 v2.100 h-2.100z M112.5 3.6 h2.100 v2.100 h-2.100z M102.0 5.7 h2.100 v2.100 h-2.100z M106.2 5.7 h2.100 v2.100 h-2.100z M110.4 5.7 h2.100 v2.100 h-2.100z M104.1 7.8 h2.100 v2.100 h-2.100z M108.3 7.8 h2.100 v2.100 h-2.100z M112.5 7.8 h2.100 v2.100 h-2.100z M102.0 9.9 h2.100 v2.100 h-2.100z M106.2 9.9 h2.100 v2.100 h-2.100z M110.4 9.9 h2.100 v2.100 h-2.100z M104.1 12.0 h2.100 v2.100 h-2.100z M108.3 12.0 h2.100 v2.100 h-2.100z M112.5 12.0 h2.100 v2.100 h-2.100z " fill="#dfe2ec"/></svg>
<div class="t" style="left:59px;top:669px;font-size:16px;line-height:20px;color:#d0d4e2">叠加2</div>
<svg style="left:6px;top:684px" width="23" height="14" viewBox="0 0 23 14"><rect x="0.700" y="0.800" width="15" height="12" rx="2" fill="#d0d4e2"/><path d="M16.500 5 L21.300 1.500 V12 L16.500 8.500z" fill="#d0d4e2"/></svg>
<div class="t" style="left:7px;top:685px;width:15px;text-align:center;font-size:10.500px;line-height:12px;font-weight:bold;color:#252c44">2</div>
<svg style="left:60px;top:692px" width="120" height="16" viewBox="0 0 120 16"><g fill="none" stroke="#4d5876" stroke-width="1.700" transform="translate(.5 2) scale(.94)"><rect x="5.500" y="6" width="7.500" height="4.600" rx="2.300" transform="rotate(-45 9 8.500)"/><rect x="10.500" y="1.500" width="7.500" height="4.600" rx="2.300" transform="rotate(-45 14 4)"/></g><path d="M51.500 5.500 h3.500 l4.500 -3.700 v12 l-4.500 -3.700 h-3.500z" fill="#d0d4e2"/><g fill="none" stroke="#d0d4e2" stroke-width="1.500"><path d="M62 5 q1.700 2.800 0 5.600"/><path d="M64.800 2.800 q3.200 5 0 10"/></g><path d="M102.0 1.5 h2.100 v2.100 h-2.100z M106.2 1.5 h2.100 v2.100 h-2.100z M110.4 1.5 h2.100 v2.100 h-2.100z M104.1 3.6 h2.100 v2.100 h-2.100z M108.3 3.6 h2.100 v2.100 h-2.100z M112.5 3.6 h2.100 v2.100 h-2.100z M102.0 5.7 h2.100 v2.100 h-2.100z M106.2 5.7 h2.100 v2.100 h-2.100z M110.4 5.7 h2.100 v2.100 h-2.100z M104.1 7.8 h2.100 v2.100 h-2.100z M108.3 7.8 h2.100 v2.100 h-2.100z M112.5 7.8 h2.100 v2.100 h-2.100z M102.0 9.9 h2.100 v2.100 h-2.100z M106.2 9.9 h2.100 v2.100 h-2.100z M110.4 9.9 h2.100 v2.100 h-2.100z M104.1 12.0 h2.100 v2.100 h-2.100z M108.3 12.0 h2.100 v2.100 h-2.100z M112.5 12.0 h2.100 v2.100 h-2.100z " fill="#dfe2ec"/></svg>
<div class="t" style="left:59px;top:730px;font-size:16px;line-height:20px;color:#d0d4e2">叠加3</div>
<svg style="left:6px;top:745px" width="23" height="14" viewBox="0 0 23 14"><rect x="0.700" y="0.800" width="15" height="12" rx="2" fill="#d0d4e2"/><path d="M16.500 5 L21.300 1.500 V12 L16.500 8.500z" fill="#d0d4e2"/></svg>
<div class="t" style="left:7px;top:746px;width:15px;text-align:center;font-size:10.500px;line-height:12px;font-weight:bold;color:#252c44">3</div>
<svg style="left:60px;top:753px" width="120" height="16" viewBox="0 0 120 16"><g fill="none" stroke="#4d5876" stroke-width="1.700" transform="translate(.5 2) scale(.94)"><rect x="5.500" y="6" width="7.500" height="4.600" rx="2.300" transform="rotate(-45 9 8.500)"/><rect x="10.500" y="1.500" width="7.500" height="4.600" rx="2.300" transform="rotate(-45 14 4)"/></g><path d="M51.500 5.500 h3.500 l4.500 -3.700 v12 l-4.500 -3.700 h-3.500z" fill="#d0d4e2"/><g fill="none" stroke="#d0d4e2" stroke-width="1.500"><path d="M62 5 q1.700 2.800 0 5.600"/><path d="M64.800 2.800 q3.200 5 0 10"/></g><path d="M102.0 1.5 h2.100 v2.100 h-2.100z M106.2 1.5 h2.100 v2.100 h-2.100z M110.4 1.5 h2.100 v2.100 h-2.100z M104.1 3.6 h2.100 v2.100 h-2.100z M108.3 3.6 h2.100 v2.100 h-2.100z M112.5 3.6 h2.100 v2.100 h-2.100z M102.0 5.7 h2.100 v2.100 h-2.100z M106.2 5.7 h2.100 v2.100 h-2.100z M110.4 5.7 h2.100 v2.100 h-2.100z M104.1 7.8 h2.100 v2.100 h-2.100z M108.3 7.8 h2.100 v2.100 h-2.100z M112.5 7.8 h2.100 v2.100 h-2.100z M102.0 9.9 h2.100 v2.100 h-2.100z M106.2 9.9 h2.100 v2.100 h-2.100z M110.4 9.9 h2.100 v2.100 h-2.100z M104.1 12.0 h2.100 v2.100 h-2.100z M108.3 12.0 h2.100 v2.100 h-2.100z M112.5 12.0 h2.100 v2.100 h-2.100z " fill="#dfe2ec"/></svg>
<div class="t" style="left:59px;top:791px;font-size:16px;line-height:20px;color:#d0d4e2">叠加4</div>
<svg style="left:6px;top:806px" width="23" height="14" viewBox="0 0 23 14"><rect x="0.700" y="0.800" width="15" height="12" rx="2" fill="#d0d4e2"/><path d="M16.500 5 L21.300 1.500 V12 L16.500 8.500z" fill="#d0d4e2"/></svg>
<div class="t" style="left:7px;top:807px;width:15px;text-align:center;font-size:10.500px;line-height:12px;font-weight:bold;color:#252c44">4</div>
<svg style="left:60px;top:814px" width="120" height="16" viewBox="0 0 120 16"><g fill="none" stroke="#4d5876" stroke-width="1.700" transform="translate(.5 2) scale(.94)"><rect x="5.500" y="6" width="7.500" height="4.600" rx="2.300" transform="rotate(-45 9 8.500)"/><rect x="10.500" y="1.500" width="7.500" height="4.600" rx="2.300" transform="rotate(-45 14 4)"/></g><path d="M51.500 5.500 h3.500 l4.500 -3.700 v12 l-4.500 -3.700 h-3.500z" fill="#d0d4e2"/><g fill="none" stroke="#d0d4e2" stroke-width="1.500"><path d="M62 5 q1.700 2.800 0 5.600"/><path d="M64.800 2.800 q3.200 5 0 10"/></g><path d="M102.0 1.5 h2.100 v2.100 h-2.100z M106.2 1.5 h2.100 v2.100 h-2.100z M110.4 1.5 h2.100 v2.100 h-2.100z M104.1 3.6 h2.100 v2.100 h-2.100z M108.3 3.6 h2.100 v2.100 h-2.100z M112.5 3.6 h2.100 v2.100 h-2.100z M102.0 5.7 h2.100 v2.100 h-2.100z M106.2 5.7 h2.100 v2.100 h-2.100z M110.4 5.7 h2.100 v2.100 h-2.100z M104.1 7.8 h2.100 v2.100 h-2.100z M108.3 7.8 h2.100 v2.100 h-2.100z M112.5 7.8 h2.100 v2.100 h-2.100z M102.0 9.9 h2.100 v2.100 h-2.100z M106.2 9.9 h2.100 v2.100 h-2.100z M110.4 9.9 h2.100 v2.100 h-2.100z M104.1 12.0 h2.100 v2.100 h-2.100z M108.3 12.0 h2.100 v2.100 h-2.100z M112.5 12.0 h2.100 v2.100 h-2.100z " fill="#dfe2ec"/></svg>
<div class="a" style="left:199px;top:538px;width:2px;height:60px;background:linear-gradient(90deg,#f4f4f8 0 70%,#2a4a90 70%)"></div>
<div class="a" style="left:197px;top:592px;width:770px;height:247px;border:4px solid #e8111a;z-index:5"></div>
<div class="a" style="left:1576px;top:538px;width:24px;height:298px;background:#232a41"></div>
<div class="a" style="left:1585px;top:557px;width:7px;height:262px;background:#2f3a58"></div>
<svg style="left:1581px;top:540px" width="14" height="300" viewBox="0 0 14 300"><path d="M3 7 L7.400 2 L11.800 7z" fill="#d0d4e2"/><path d="M3 287 L7.400 292 L11.800 287z" fill="#c0c4d6"/></svg>
<!-- bottom bar -->
<div class="a" style="left:0;top:836px;width:1600px;height:24px;background:#20263a"></div>
<div class="a" style="left:166px;top:842px;width:1410px;height:8px;background:#21283d"></div>
<div class="a" style="left:166px;top:842px;width:908px;height:8px;background:#2e3654"></div>
<div class="a" style="left:83px;top:841px;width:24px;height:12px;background:#26395e"></div>
<svg style="left:83px;top:841px" width="80" height="12" viewBox="0 0 80 12"><path d="M4 6.500 h4 M6 4.500 v4 M9.500 8 h7 M11 8 V5 M13.500 8 V4 M16 8 V5 M17.500 3.500 h4 l-2 2.500 v3" stroke="#2f9cf0" stroke-width="1" fill="none"/><path d="M46 2 V10 L40.500 6z" fill="#d0d4e2"/><path d="M62 2 V10 L67.500 6z" fill="#d0d4e2"/></svg>


<!-- ============ TASKBAR ============ -->
<div id="task" class="a" style="left:0;top:860px;width:1600px;height:8px;background:linear-gradient(90deg,#4a8cc4 0,#2a6aa8 12%,#1d5a98 30%,#2468a8 55%,#3c86c4 68%,#2a6cb0 76%,#1a3a64 86%,#162c4c 100%);border-top:1px solid #7aa8d0"></div>
<div class="a" style="left:8px;top:861px;width:40px;height:20px;border-radius:50%;background:radial-gradient(circle at 50% 40%,#cfe4f4,#5a90c0);border:1px solid #d8e8f4"></div>
<div class="a" style="left:60px;top:861px;width:58px;height:10px;border-radius:3px 3px 0 0;background:linear-gradient(180deg,#d4e6f4,#a8cbe6);border:1px solid #e8f2fa;border-bottom:0"></div>
<div class="a" style="left:122px;top:861px;width:58px;height:10px;border-radius:3px 3px 0 0;background:linear-gradient(180deg,#d4e6f4,#a8cbe6);border:1px solid #e8f2fa;border-bottom:0"></div>
<div class="a" style="left:184px;top:861px;width:58px;height:10px;border-radius:3px 3px 0 0;background:linear-gradient(180deg,#d4e6f4,#a8cbe6);border:1px solid #e8f2fa;border-bottom:0"></div>
<div class="a" style="left:246px;top:861px;width:58px;height:10px;border-radius:3px 3px 0 0;background:linear-gradient(180deg,#d4e6f4,#a8cbe6);border:1px solid #e8f2fa;border-bottom:0"></div>
<div class="a" style="left:308px;top:861px;width:58px;height:10px;border-radius:3px 3px 0 0;background:linear-gradient(180deg,#d4e6f4,#a8cbe6);border:1px solid #e8f2fa;border-bottom:0"></div>
<div class="a" style="left:370px;top:861px;width:58px;height:10px;border-radius:3px 3px 0 0;background:linear-gradient(180deg,#d4e6f4,#a8cbe6);border:1px solid #e8f2fa;border-bottom:0"></div>
<div class="a" style="left:432px;top:861px;width:58px;height:10px;border-radius:3px 3px 0 0;background:linear-gradient(180deg,#d4e6f4,#a8cbe6);border:1px solid #e8f2fa;border-bottom:0"></div>
<div class="a" style="left:81px;top:864px;width:16px;height:6px;border-radius:50%;background:#e8f4e8"></div>
<div class="a" style="left:204px;top:864px;width:16px;height:6px;border-radius:50%;background:#f4f8fc"></div>
<div class="a" style="left:323px;top:865px;width:26px;height:5px;border-radius:3px 3px 0 0;background:#2a7ce0"></div>
<div class="a" style="left:445px;top:864px;width:32px;height:4px;background:repeating-linear-gradient(90deg,#101010 0 6px,#e8f0f8 6px 8px)"></div>
<div class="a" style="left:1586px;top:861px;width:14px;height:7px;background:linear-gradient(180deg,#8a98ac,#5c6c84);border-left:1px solid #a8b4c4"></div>
<div class="t" style="left:1544px;top:865px;font-size:12px;line-height:12px;color:#fff">15:14</div>

<!-- ============ OVERLAYS ============ -->
<!-- speed widget -->
<div class="a" style="left:1510px;top:410px;width:89px;height:38px;border-radius:19px;background:linear-gradient(180deg,#fafafa,#e6e6e6);box-shadow:0 1px 3px rgba(0,0,0,.5)"></div>
<div class="a" style="left:1473px;top:404px;width:48px;height:48px;border-radius:50%;background:#d6f0e2;box-shadow:0 1px 3px rgba(0,0,0,.4)"></div>
<div class="a" style="left:1476px;top:407px;width:42px;height:42px;border-radius:50%;background:linear-gradient(180deg,#2a8f62 0,#2f9a68 21%,#48cc64 22%,#36b854 100%);overflow:hidden"></div>
<div class="a" style="left:1489px;top:408px;width:14px;height:4px;border-radius:50%;background:rgba(255,255,255,.55)"></div>
<div class="t" style="left:1473px;top:419px;width:48px;text-align:center;font-size:15px;line-height:18px;color:#eafaf0;letter-spacing:-0.3px">76%</div>
<svg style="left:1524px;top:416px" width="10" height="26" viewBox="0 0 10 26"><path d="M5 1 L8.500 4.500 H6.200 V9 H3.800 V4.500 H1.500z" fill="#e05048"/><path d="M5 23.500 L8.500 20 H6.200 V15.500 H3.800 V20 H1.500z" fill="#2a9a58"/></svg>
<div class="t" style="left:1530px;top:416px;width:40px;text-align:right;font-size:9.500px;line-height:11px;color:#111">0.6K/s</div>
<div class="t" style="left:1530px;top:430px;width:40px;text-align:right;font-size:9.500px;line-height:11px;color:#111">16.3K/s</div>
<div class="a" style="left:1576px;top:421px;width:16px;height:16px;border-radius:50%;background:#3a82dc"></div>
<svg style="left:1576px;top:417px" width="20" height="22" viewBox="0 0 20 22"><path d="M8 8.500 v7 M4.500 12 h7" stroke="#fff" stroke-width="2"/><circle cx="14" cy="5.500" r="3.500" fill="#f02c34"/></svg>
<!-- IME bar -->
<div class="a" style="left:1390px;top:664px;width:206px;height:70px;border-radius:16px;background:#9bcb5d;border:3px solid #f4f9e6"></div>
<svg style="left:1390px;top:620px" width="210" height="118" viewBox="1390 620 210 118">
<ellipse cx="1530" cy="714" rx="22" ry="6" fill="#8abc4c"/>
<ellipse cx="1505" cy="726" rx="30" ry="5" fill="#8fc052"/>
<!-- stump -->
<path d="M1450 671 v20 q4 4 8 1 q6 4 12 1 q6 3 12 0 q5 2 10 -2 v-20z" fill="#bf582a"/>
<ellipse cx="1471" cy="671" rx="21" ry="8" fill="#d4733c"/><ellipse cx="1471" cy="671" rx="14" ry="5" fill="none" stroke="#c0602e" stroke-width="1"/><ellipse cx="1471" cy="671" rx="7" ry="2.500" fill="none" stroke="#c0602e" stroke-width="1"/>
<!-- critter & mushrooms -->
<ellipse cx="1453" cy="663" rx="9" ry="6.500" fill="#f8f8f4"/><circle cx="1445" cy="660" r="2.500" fill="#f0a0a0"/><circle cx="1463" cy="658" r="2.500" fill="#d090c0"/>
<path d="M1469 652 q6 -7 12 0 q-6 2 -12 0z" fill="#f08a80"/><rect x="1473.500" y="652" width="3" height="5" fill="#f8e8e0"/>
<path d="M1438 664 l8 14" stroke="#4a9a5c" stroke-width="1.500"/>
<!-- big blob -->
<path d="M1512 700 q-2 16 8 16 q5 0 6 -5 q1 5 6 5 q9 0 7 -18z" fill="#fdfdfb"/>
<ellipse cx="1523" cy="668" rx="36.500" ry="32" fill="#fefefc"/>
<path d="M1508 632 q-6 -1 -6 4 q6 2 8 -1 q2 -4 0 -8 q-4 3 -2 5 M1510 634 q4 0 5 5" fill="#b8dc48" stroke="#a8cc40" stroke-width="1"/>
<ellipse cx="1516" cy="656" rx="2.300" ry="2.500" fill="#a03c18"/><ellipse cx="1534.500" cy="653" rx="2.300" ry="2.500" fill="#a03c18"/>
<path d="M1521 655 q1.200 3 3 0 q1.200 3 3 -0.500" stroke="#a03c18" stroke-width="1" fill="none"/>
<ellipse cx="1510" cy="660" rx="3.500" ry="2" fill="#f8c0b8"/><ellipse cx="1541" cy="656" rx="3.500" ry="2" fill="#f8c0b8"/>
<path d="M1521 694 q2 -4 4 0 M1530 693 q2 -4 4 0" stroke="#d8d8e4" stroke-width="1" fill="none"/>
<!-- small blob -->
<ellipse cx="1488" cy="717" rx="14.500" ry="10.500" fill="#fbfdf8" stroke="#eaf4d8" stroke-width="1"/>
<path d="M1482 713 q4 -3 7 0 M1490 712 q3 3 6 1 M1489 712 l3 6" stroke="#d06070" stroke-width=".9" fill="none"/>
<!-- bubbles -->
<circle cx="1551" cy="698" r="9.500" fill="#d8eec0" stroke="#eef8e0" stroke-width="1.200" opacity=".9"/><path d="M1546 700 l4 -6 4 8" stroke="#f0d870" stroke-width="1" fill="none" opacity=".8"/>
<ellipse cx="1507" cy="716" rx="6" ry="4.500" fill="#cfe8c0" stroke="#eef8e0" stroke-width="1" opacity=".9"/>
<ellipse cx="1514" cy="706" rx="4" ry="3.500" fill="#e0f0d0" opacity=".8"/>
<!-- notes -->
<g fill="#4a3010"><path d="M1499 706 v-7 l8 -1.500 v7 h-1.200 v-4.500 l-5.600 1 v5z"/><circle cx="1498.300" cy="706" r="1.600"/><circle cx="1506" cy="704.500" r="1.600"/>
<path d="M1463 709 l6 -3 2.500 5 -1 .5 -1.800 -3.500 -3.800 2 1.600 3.500z"/><circle cx="1466" cy="714" r="1.500"/><circle cx="1470.500" cy="711.500" r="1.500"/>
<path d="M1450 701 l5 4" stroke="#4a3010" stroke-width="1.200"/><circle cx="1455.500" cy="705.500" r="1.400"/>
<path d="M1438 690 l1 5" stroke="#4a3010" stroke-width="1"/><circle cx="1438.500" cy="695" r="1.300"/>
<path d="M1566 681 l4 5" stroke="#4a3010" stroke-width="1.200"/><circle cx="1570.500" cy="686" r="1.500"/></g>
<!-- deco -->
<path d="M1574 700 q3 -4 5 0 q3 -4 6 0" stroke="#86b84a" stroke-width="1.300" fill="none"/>
<g fill="#f6faf0"><path d="M1565 708 l4 2.500 -4 2.500 -4 -2.500z"/><path d="M1579 714 l5 3 -5 3 -5 -3z"/><path d="M1458 719 l5 3 -5 3 -5 -3z"/></g>
<ellipse cx="1563" cy="731" rx="6" ry="3" fill="#d8ecc0"/>
<!-- punctuation & shirt -->
<path d="M1410 709.500 q3 .5 2.500 3.500 q-.5 2 -3 3 q2 -2 .5 -3.500 q-1.500 -1.500 0 -3z" fill="#f6faf0"/><circle cx="1417.500" cy="715.500" r="2.600" fill="#f6faf0"/>
<path d="M1435 710.500 l3 -1 q2 2 4 0 l3 1 2 3.500 -2.500 1.200 -1 -1.200 v7.500 h-7 v-7.500 l-1 1.200 -2.500 -1.200z" fill="#f6faf0"/>
</svg>
<div class="t" style="left:1405px;top:678px;font-size:18px;line-height:20px;color:#eef6e0">英</div>
<!-- watermark -->
<div class="t" style="left:1277px;top:797px;font-size:40px;line-height:46px;font-weight:900;color:#fff;text-shadow:1.500px 1.500px 1.500px rgba(0,0,0,.9),0 0 2px rgba(0,0,0,.6)">头条</div>
<div class="t" style="left:1367px;top:798px;font-size:41.300px;line-height:46px;color:#fff;text-shadow:1.500px 1.500px 1.500px rgba(0,0,0,.9),0 0 2px rgba(0,0,0,.6)">@极速手助</div>
</body>
</html>
